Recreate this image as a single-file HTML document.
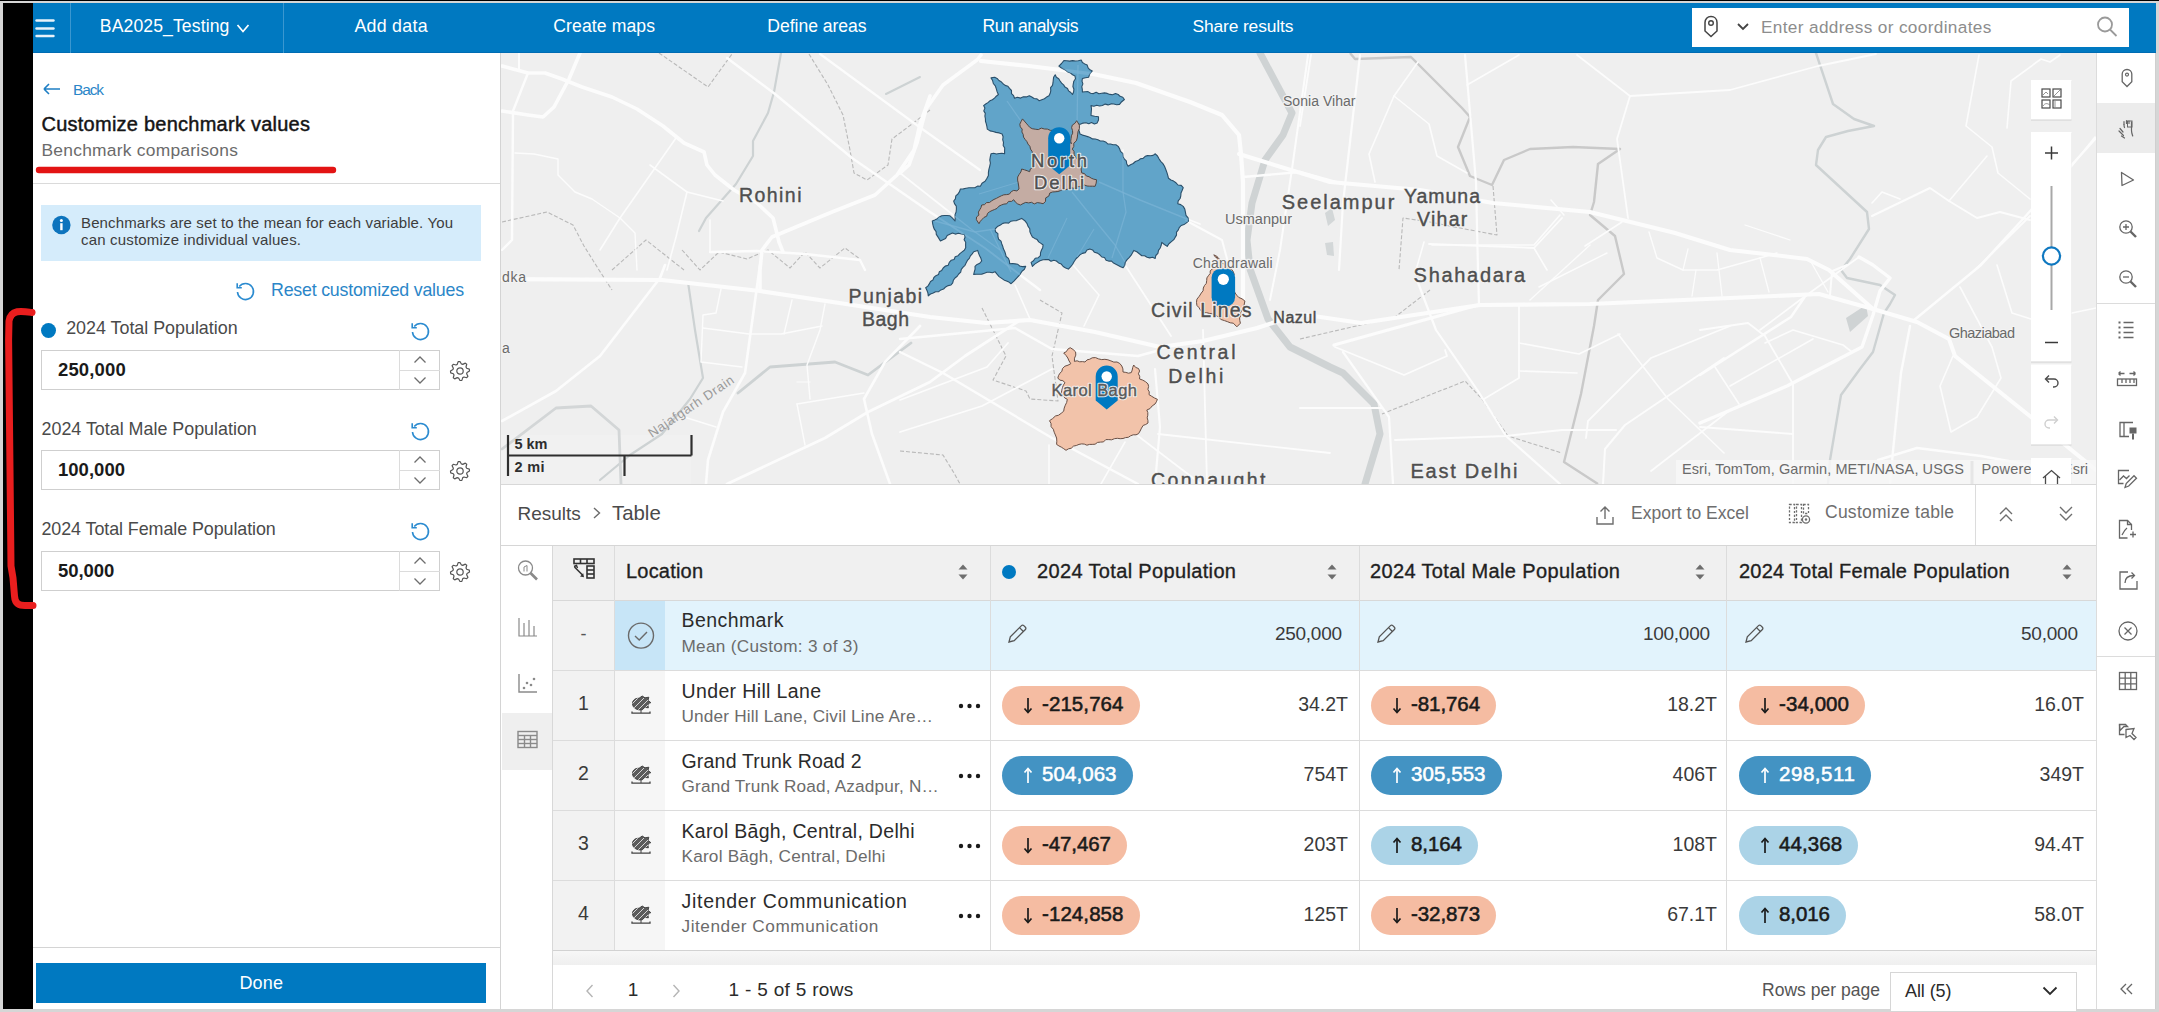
<!DOCTYPE html>
<html><head><meta charset="utf-8"><title>Business Analyst</title>
<style>
html,body{margin:0;padding:0;width:2159px;height:1012px;overflow:hidden;position:relative;font-family:"Liberation Sans",sans-serif;}
svg{display:block;overflow:visible}
</style></head><body>
<div style="position:absolute;left:0px;top:0px;width:2159px;height:1012px;background:#d6d6d6;"></div>
<div style="position:absolute;left:0px;top:0px;width:2159px;height:1px;background:#000;"></div>
<div style="position:absolute;left:3px;top:3px;width:30px;height:1006px;background:#000;"></div>
<div style="position:absolute;left:33px;top:3px;width:2123px;height:50px;background:#0079c1;"></div>
<div style="position:absolute;left:33px;top:52px;width:2123px;height:1px;background:#006cb3;"></div>
<div style="position:absolute;left:70px;top:3px;width:1px;height:50px;background:#3a97d0;"></div>
<div style="position:absolute;left:283px;top:3px;width:1px;height:50px;background:#3a97d0;"></div>
<svg style="position:absolute;left:35px;top:17px;" width="20" height="22" viewBox="0 0 20 22"><g stroke="#e8f2fa" stroke-width="2.4" stroke-linecap="round"><line x1="1.5" y1="3.5" x2="18.5" y2="3.5"/><line x1="1.5" y1="11.5" x2="18.5" y2="11.5"/><line x1="1.5" y1="19" x2="18.5" y2="19"/></g></svg>
<div style="position:absolute;top:15.70px;font-size:17.6px;line-height:21px;color:#ffffff;font-weight:normal;white-space:nowrap;letter-spacing:0.109px;left:99.8px;">BA2025_Testing</div>
<svg style="position:absolute;left:236px;top:23px;" width="14" height="12" viewBox="0 0 14 12"><polyline points="1.5,2 7,8.5 12.5,2" fill="none" stroke="#fff" stroke-width="1.7"/></svg>
<div style="position:absolute;top:15.63px;font-size:17.8px;line-height:21px;color:#ffffff;font-weight:normal;white-space:nowrap;letter-spacing:0.277px;left:354.4px;">Add data</div>
<div style="position:absolute;top:15.70px;font-size:17.6px;line-height:21px;color:#ffffff;font-weight:normal;white-space:nowrap;letter-spacing:0.094px;left:553.3px;">Create maps</div>
<div style="position:absolute;top:15.70px;font-size:17.6px;line-height:21px;color:#ffffff;font-weight:normal;white-space:nowrap;letter-spacing:-0.036px;left:767.3px;">Define areas</div>
<div style="position:absolute;top:15.70px;font-size:17.6px;line-height:21px;color:#ffffff;font-weight:normal;white-space:nowrap;letter-spacing:-0.415px;left:982.5px;">Run analysis</div>
<div style="position:absolute;top:15.77px;font-size:17.4px;line-height:21px;color:#ffffff;font-weight:normal;white-space:nowrap;letter-spacing:-0.143px;left:1192.6px;">Share results</div>
<div style="position:absolute;left:1692px;top:8px;width:437px;height:39px;background:#fff;"></div>
<svg style="position:absolute;left:1700px;top:14px;" width="24" height="26" viewBox="0 0 24 26"><path d="M11 2.5c-3.6 0-6 2.6-6 6v8.5l6 5.5 6-5.5V8.5c0-3.4-2.4-6-6-6z" fill="none" stroke="#444" stroke-width="1.5"/><circle cx="11" cy="9" r="2.3" fill="none" stroke="#444" stroke-width="1.4"/></svg>
<svg style="position:absolute;left:1736px;top:22px;" width="14" height="10" viewBox="0 0 14 10"><polyline points="2,2 7,7 12,2" fill="none" stroke="#444" stroke-width="1.8"/></svg>
<div style="position:absolute;top:16.54px;font-size:17.2px;line-height:21px;color:#8d8d8d;font-weight:normal;white-space:nowrap;letter-spacing:0.357px;left:1761px;">Enter address or coordinates</div>
<svg style="position:absolute;left:2094px;top:14px;" width="26" height="26" viewBox="0 0 26 26"><circle cx="11" cy="10.5" r="7" fill="none" stroke="#9a9a9a" stroke-width="1.8"/><line x1="16" y1="15.5" x2="22.5" y2="22" stroke="#9a9a9a" stroke-width="1.8"/></svg>
<div style="position:absolute;left:33px;top:53px;width:468px;height:956px;background:#fff;"></div>
<div style="position:absolute;left:500px;top:53px;width:1px;height:956px;background:#d4d4d4;"></div>
<svg style="position:absolute;left:42px;top:82px;" width="20" height="14" viewBox="0 0 20 14"><path d="M2 7h16M2 7l5-5M2 7l5 5" fill="none" stroke="#1f7fc4" stroke-width="1.6"/></svg>
<div style="position:absolute;top:79.63px;font-size:15.5px;line-height:19px;color:#2b86c8;font-weight:normal;white-space:nowrap;letter-spacing:-1.153px;left:73px;">Back</div>
<div style="position:absolute;top:112.07px;font-size:20px;line-height:24px;color:#151515;font-weight:normal;white-space:nowrap;letter-spacing:0.246px;left:41.5px;-webkit-text-stroke:0.45px #151515;">Customize benchmark values</div>
<div style="position:absolute;top:139.77px;font-size:17.4px;line-height:21px;color:#6b6b6b;font-weight:normal;white-space:nowrap;letter-spacing:0.251px;left:41.5px;">Benchmark comparisons</div>
<div style="position:absolute;left:33px;top:183px;width:467px;height:1px;background:#dadada;"></div>
<div style="position:absolute;left:41px;top:205px;width:440px;height:56px;background:#d5ecfb;"></div>
<svg style="position:absolute;left:51px;top:215px;" width="21" height="21" viewBox="0 0 21 21"><circle cx="10.4" cy="10" r="9.2" fill="#0d74bd"/><rect x="9.2" y="8.2" width="2.4" height="7" fill="#fff"/><circle cx="10.4" cy="5.4" r="1.5" fill="#fff"/></svg>
<div style="position:absolute;top:213.80px;font-size:15px;line-height:18px;color:#3d3d3d;font-weight:normal;white-space:nowrap;letter-spacing:0.130px;left:81px;">Benchmarks are set to the mean for each variable. You</div>
<div style="position:absolute;top:231.20px;font-size:15px;line-height:18px;color:#3d3d3d;font-weight:normal;white-space:nowrap;letter-spacing:0.184px;left:81px;">can customize individual values.</div>
<svg style="position:absolute;left:233.5px;top:279.5px;" width="22" height="22" viewBox="0 0 22 22"><path d="M5.2 6.6A8 8 0 1 1 3.5 12" fill="none" stroke="#2b8bd0" stroke-width="1.6"/><path d="M3.2 3.2v4.6h4.6" fill="none" stroke="#2b8bd0" stroke-width="1.6"/></svg>
<div style="position:absolute;top:280.33px;font-size:17.8px;line-height:21px;color:#2b86c8;font-weight:normal;white-space:nowrap;letter-spacing:-0.208px;left:271px;">Reset customized values</div>
<div style="position:absolute;left:41px;top:322.5px;width:15px;height:15px;background:#0079c1;border-radius:50%;"></div>
<div style="position:absolute;top:318.30px;font-size:17.9px;line-height:21px;color:#4a4a4a;font-weight:normal;white-space:nowrap;letter-spacing:-0.018px;left:66.2px;">2024 Total Population</div>
<svg style="position:absolute;left:409px;top:319.5px;" width="22" height="22" viewBox="0 0 22 22"><path d="M5.2 6.6A8 8 0 1 1 3.5 12" fill="none" stroke="#2b8bd0" stroke-width="1.6"/><path d="M3.2 3.2v4.6h4.6" fill="none" stroke="#2b8bd0" stroke-width="1.6"/></svg>
<div style="position:absolute;left:41px;top:350px;width:399px;height:40px;background:#fff;border:1px solid #cfcfcf;box-sizing:border-box;"></div>
<div style="position:absolute;left:399px;top:350px;width:1px;height:40px;background:#dcdcdc;"></div>
<div style="position:absolute;left:399px;top:370px;width:41px;height:1px;background:#dcdcdc;"></div>
<svg style="position:absolute;left:412px;top:353px;" width="16" height="14" viewBox="0 0 16 14"><polyline points="2.5,9.5 8,4 13.5,9.5" fill="none" stroke="#6e6e6e" stroke-width="1.3"/></svg>
<svg style="position:absolute;left:412px;top:373px;" width="16" height="14" viewBox="0 0 16 14"><polyline points="2.5,4.5 8,10 13.5,4.5" fill="none" stroke="#6e6e6e" stroke-width="1.3"/></svg>
<div style="position:absolute;top:359.09px;font-size:18.5px;line-height:22px;color:#1a1a1a;font-weight:bold;white-space:nowrap;letter-spacing:0.138px;left:58px;">250,000</div>
<svg style="position:absolute;left:450px;top:360.5px;" width="20" height="20" viewBox="0 0 20 20"><polygon points="19.32,8.15 19.50,10.00 17.06,11.40 16.65,12.76 17.90,15.28 16.72,16.72 14.00,15.99 12.76,16.65 11.85,19.32 10.00,19.50 8.60,17.06 7.24,16.65 4.72,17.90 3.28,16.72 4.01,14.00 3.35,12.76 0.68,11.85 0.50,10.00 2.94,8.60 3.35,7.24 2.10,4.72 3.28,3.28 6.00,4.01 7.24,3.35 8.15,0.68 10.00,0.50 11.40,2.94 12.76,3.35 15.28,2.10 16.72,3.28 15.99,6.00 16.65,7.24" fill="none" stroke="#555" stroke-width="1.2" stroke-linejoin="round"/><circle cx="10" cy="10" r="3.2" fill="none" stroke="#555" stroke-width="1.2"/></svg>
<div style="position:absolute;top:418.90px;font-size:17.9px;line-height:21px;color:#4a4a4a;font-weight:normal;white-space:nowrap;letter-spacing:-0.009px;left:41.5px;">2024 Total Male Population</div>
<svg style="position:absolute;left:409px;top:420.1px;" width="22" height="22" viewBox="0 0 22 22"><path d="M5.2 6.6A8 8 0 1 1 3.5 12" fill="none" stroke="#2b8bd0" stroke-width="1.6"/><path d="M3.2 3.2v4.6h4.6" fill="none" stroke="#2b8bd0" stroke-width="1.6"/></svg>
<div style="position:absolute;left:41px;top:450px;width:399px;height:40px;background:#fff;border:1px solid #cfcfcf;box-sizing:border-box;"></div>
<div style="position:absolute;left:399px;top:450px;width:1px;height:40px;background:#dcdcdc;"></div>
<div style="position:absolute;left:399px;top:470px;width:41px;height:1px;background:#dcdcdc;"></div>
<svg style="position:absolute;left:412px;top:453px;" width="16" height="14" viewBox="0 0 16 14"><polyline points="2.5,9.5 8,4 13.5,9.5" fill="none" stroke="#6e6e6e" stroke-width="1.3"/></svg>
<svg style="position:absolute;left:412px;top:473px;" width="16" height="14" viewBox="0 0 16 14"><polyline points="2.5,4.5 8,10 13.5,4.5" fill="none" stroke="#6e6e6e" stroke-width="1.3"/></svg>
<div style="position:absolute;top:459.09px;font-size:18.5px;line-height:22px;color:#1a1a1a;font-weight:bold;white-space:nowrap;letter-spacing:0.021px;left:58px;">100,000</div>
<svg style="position:absolute;left:450px;top:460.5px;" width="20" height="20" viewBox="0 0 20 20"><polygon points="19.32,8.15 19.50,10.00 17.06,11.40 16.65,12.76 17.90,15.28 16.72,16.72 14.00,15.99 12.76,16.65 11.85,19.32 10.00,19.50 8.60,17.06 7.24,16.65 4.72,17.90 3.28,16.72 4.01,14.00 3.35,12.76 0.68,11.85 0.50,10.00 2.94,8.60 3.35,7.24 2.10,4.72 3.28,3.28 6.00,4.01 7.24,3.35 8.15,0.68 10.00,0.50 11.40,2.94 12.76,3.35 15.28,2.10 16.72,3.28 15.99,6.00 16.65,7.24" fill="none" stroke="#555" stroke-width="1.2" stroke-linejoin="round"/><circle cx="10" cy="10" r="3.2" fill="none" stroke="#555" stroke-width="1.2"/></svg>
<div style="position:absolute;top:519.20px;font-size:17.9px;line-height:21px;color:#4a4a4a;font-weight:normal;white-space:nowrap;letter-spacing:-0.078px;left:41.5px;">2024 Total Female Population</div>
<svg style="position:absolute;left:409px;top:520.4px;" width="22" height="22" viewBox="0 0 22 22"><path d="M5.2 6.6A8 8 0 1 1 3.5 12" fill="none" stroke="#2b8bd0" stroke-width="1.6"/><path d="M3.2 3.2v4.6h4.6" fill="none" stroke="#2b8bd0" stroke-width="1.6"/></svg>
<div style="position:absolute;left:41px;top:551px;width:399px;height:40px;background:#fff;border:1px solid #cfcfcf;box-sizing:border-box;"></div>
<div style="position:absolute;left:399px;top:551px;width:1px;height:40px;background:#dcdcdc;"></div>
<div style="position:absolute;left:399px;top:571px;width:41px;height:1px;background:#dcdcdc;"></div>
<svg style="position:absolute;left:412px;top:554px;" width="16" height="14" viewBox="0 0 16 14"><polyline points="2.5,9.5 8,4 13.5,9.5" fill="none" stroke="#6e6e6e" stroke-width="1.3"/></svg>
<svg style="position:absolute;left:412px;top:574px;" width="16" height="14" viewBox="0 0 16 14"><polyline points="2.5,4.5 8,10 13.5,4.5" fill="none" stroke="#6e6e6e" stroke-width="1.3"/></svg>
<div style="position:absolute;top:560.09px;font-size:18.5px;line-height:22px;color:#1a1a1a;font-weight:bold;white-space:nowrap;letter-spacing:-0.057px;left:58px;">50,000</div>
<svg style="position:absolute;left:450px;top:561.5px;" width="20" height="20" viewBox="0 0 20 20"><polygon points="19.32,8.15 19.50,10.00 17.06,11.40 16.65,12.76 17.90,15.28 16.72,16.72 14.00,15.99 12.76,16.65 11.85,19.32 10.00,19.50 8.60,17.06 7.24,16.65 4.72,17.90 3.28,16.72 4.01,14.00 3.35,12.76 0.68,11.85 0.50,10.00 2.94,8.60 3.35,7.24 2.10,4.72 3.28,3.28 6.00,4.01 7.24,3.35 8.15,0.68 10.00,0.50 11.40,2.94 12.76,3.35 15.28,2.10 16.72,3.28 15.99,6.00 16.65,7.24" fill="none" stroke="#555" stroke-width="1.2" stroke-linejoin="round"/><circle cx="10" cy="10" r="3.2" fill="none" stroke="#555" stroke-width="1.2"/></svg>
<div style="position:absolute;left:33px;top:947px;width:467px;height:1px;background:#d4d4d4;"></div>
<div style="position:absolute;left:36px;top:963px;width:450px;height:40px;background:#0079c1;"></div>
<div style="position:absolute;top:971.76px;font-size:18px;line-height:22px;color:#fff;font-weight:normal;white-space:nowrap;letter-spacing:0.122px;left:239.5px;">Done</div>
<svg style="position:absolute;left:0;top:0;" width="2159" height="1012" viewBox="0 0 2159 1012"><defs><clipPath id="mc"><rect x="501" y="53" width="1595" height="431"/></clipPath></defs><g clip-path="url(#mc)" font-family="Liberation Sans, sans-serif"><rect x="501" y="53" width="1595" height="431" fill="#efefef"/><rect x="501" y="435" width="190" height="49" fill="#f1f1f1" opacity="0.8"/><polyline points="1260.0,53.0 1277.0,85.0 1292.0,113.0 1283.0,135.0 1265.0,160.0 1252.0,203.0 1247.0,240.0 1250.0,269.0 1268.0,319.0 1290.0,347.0 1330.0,367.0 1343.0,373.0 1374.0,404.0 1380.0,434.0 1365.0,484.0" fill="none" stroke="#cfd3d4" stroke-width="7" stroke-linejoin="round" stroke-linecap="round"/><polyline points="781.0,53.0 774.0,92.0 768.0,113.0 753.0,141.0 753.0,156.0 736.0,184.0 706.0,218.0 699.0,231.0" fill="none" stroke="#cdd2d3" stroke-width="2.2" stroke-linejoin="round" stroke-linecap="round"/><polyline points="886.0,94.0 920.0,77.0" fill="none" stroke="#cdd2d3" stroke-width="2" stroke-linejoin="round" stroke-linecap="round"/><polyline points="688.0,282.0 695.0,330.0 703.0,378.0 690.0,399.0 662.0,434.0 630.0,455.0 600.0,480.0" fill="none" stroke="#cdd2d3" stroke-width="2.2" stroke-linejoin="round" stroke-linecap="round"/><polyline points="738.0,393.0 770.0,367.0 835.0,362.0 868.0,375.0 911.0,343.0" fill="none" stroke="#cdd2d3" stroke-width="2.8" stroke-linejoin="round" stroke-linecap="round"/><polyline points="502.0,449.0 556.0,408.0 591.0,406.0 619.0,430.0 621.0,484.0" fill="none" stroke="#d3d6d7" stroke-width="2.8" stroke-linejoin="round" stroke-linecap="round"/><polyline points="1816.0,53.0 1833.0,104.0 1854.0,119.0 1874.0,126.0 1848.0,131.0 1826.0,137.0 1818.0,150.0 1816.0,165.0 1867.0,212.0 1869.0,229.0 1850.0,259.0 1841.0,270.0 1847.0,278.0 1880.0,285.0 1895.0,295.0 1890.0,304.0 1884.0,313.0 1873.0,352.0 1860.0,369.0 1841.0,395.0 1830.0,460.0 1828.0,484.0" fill="none" stroke="#cdd2d3" stroke-width="2.4" stroke-linejoin="round" stroke-linecap="round"/><polygon points="1846,318 1866,305 1868,316 1850,332" fill="#cfd3d4"/><polygon points="1325,213 1332,208 1335,220 1328,226" fill="#d3d7d8"/><polygon points="1325,243 1333,242 1334,256 1327,255" fill="#d3d7d8"/><polyline points="659.0,53.0 708.0,87.0 732.0,54.0" fill="none" stroke="#b9b9b9" stroke-width="1.1" stroke-dasharray="4 2" stroke-linejoin="round"/><polyline points="809.0,54.0 828.0,85.0 843.0,115.0 850.0,150.0 854.0,173.0 867.0,180.0 888.0,165.0 892.0,139.0 912.0,124.0 930.0,110.0" fill="none" stroke="#b9b9b9" stroke-width="1.1" stroke-dasharray="4 2" stroke-linejoin="round"/><polyline points="502.0,222.0 547.0,212.0 573.0,225.0 584.0,246.0 599.0,270.0 612.0,290.0" fill="none" stroke="#b9b9b9" stroke-width="1.1" stroke-dasharray="4 2" stroke-linejoin="round"/><polyline points="612.0,270.0 646.0,240.0 684.0,270.0" fill="none" stroke="#b9b9b9" stroke-width="1.1" stroke-dasharray="4 2" stroke-linejoin="round"/><polyline points="682.0,250.0 700.0,270.0 719.0,252.0 747.0,259.0 768.0,250.0 790.0,268.0 805.0,252.0 820.0,268.0 845.0,248.0 860.0,259.0" fill="none" stroke="#b9b9b9" stroke-width="1.1" stroke-dasharray="4 2" stroke-linejoin="round"/><polyline points="1350.0,53.0 1355.0,59.0 1411.0,57.0 1462.0,108.0 1470.0,117.0 1458.0,147.0 1470.0,176.0 1492.0,185.0 1504.0,160.0 1530.0,149.0 1573.0,147.0 1620.0,149.0 1598.0,164.0 1594.0,202.0 1590.0,215.0 1615.0,236.0 1624.0,274.0 1598.0,300.0 1594.0,326.0 1581.0,394.0 1564.0,462.0 1598.0,484.0" fill="none" stroke="#c9c9c9" stroke-width="2.4" stroke-dasharray="0" stroke-linejoin="round"/><polyline points="1493.0,186.0 1497.0,235.0 1465.0,229.0 1430.0,222.0 1403.0,218.0 1399.0,270.0" fill="none" stroke="#b9b9b9" stroke-width="1.1" stroke-dasharray="4 2" stroke-linejoin="round"/><polyline points="1300.0,339.0 1395.0,317.0 1430.0,290.0" fill="none" stroke="#b9b9b9" stroke-width="1.1" stroke-dasharray="4 2" stroke-linejoin="round"/><polyline points="1382.0,414.0 1465.0,381.0 1482.0,399.0 1508.0,436.0 1562.0,453.0" fill="none" stroke="#b9b9b9" stroke-width="1.1" stroke-dasharray="4 2" stroke-linejoin="round"/><polyline points="982.0,308.0 1006.0,356.0 993.0,380.0 1026.0,391.0 1030.0,399.0 1058.0,401.0 1052.0,356.0 1062.0,313.0 1040.0,300.0" fill="none" stroke="#b9b9b9" stroke-width="1.1" stroke-dasharray="4 2" stroke-linejoin="round"/><polyline points="900.0,451.0 943.0,455.0 954.0,473.0 960.0,484.0" fill="none" stroke="#b9b9b9" stroke-width="1.1" stroke-dasharray="4 2" stroke-linejoin="round"/><polyline points="502.0,66.0 528.0,73.0 545.0,73.0 562.0,79.0 582.0,87.0 612.0,97.0 637.0,109.0 663.0,126.0 684.0,143.0 704.0,152.0 707.0,165.0 715.0,175.0 734.0,190.0 757.0,203.0 773.0,218.0 779.0,242.0 783.0,252.0" fill="none" stroke="#fcfcfc" stroke-width="3.6" stroke-linejoin="round" stroke-linecap="round"/><polyline points="580.0,53.0 569.0,79.0 554.0,107.0 543.0,117.0 528.0,115.0 502.0,111.0" fill="none" stroke="#fcfcfc" stroke-width="3.6" stroke-linejoin="round" stroke-linecap="round"/><polyline points="528.0,73.0 513.0,111.0 512.0,240.0 502.0,250.0" fill="none" stroke="#fcfcfc" stroke-width="2.4" stroke-linejoin="round" stroke-linecap="round"/><polyline points="519.0,53.0 519.0,70.0" fill="none" stroke="#fcfcfc" stroke-width="2" stroke-linejoin="round" stroke-linecap="round"/><polyline points="727.0,58.0 775.0,94.0 852.0,158.0 930.0,212.0 985.0,248.0 1040.0,290.0" fill="none" stroke="#fcfcfc" stroke-width="2.4" stroke-linejoin="round" stroke-linecap="round"/><polyline points="820.0,54.0 918.0,126.0 980.0,170.0" fill="none" stroke="#fcfcfc" stroke-width="2.2" stroke-linejoin="round" stroke-linecap="round"/><polyline points="930.0,96.0 920.0,124.0 914.0,150.0 897.0,175.0 875.0,195.0 832.0,212.0 796.0,227.0 772.0,237.0 762.0,250.0 760.0,270.0 760.0,291.0" fill="none" stroke="#fcfcfc" stroke-width="3.6" stroke-linejoin="round" stroke-linecap="round"/><polyline points="710.0,252.0 757.0,251.0 805.0,254.0 860.0,260.0 865.0,270.0" fill="none" stroke="#fcfcfc" stroke-width="2.4" stroke-linejoin="round" stroke-linecap="round"/><polyline points="676.0,138.0 620.0,218.0 600.0,250.0" fill="none" stroke="#fcfcfc" stroke-width="1.6" stroke-linejoin="round" stroke-linecap="round"/><polyline points="650.0,165.0 687.0,192.0 723.0,201.0" fill="none" stroke="#fcfcfc" stroke-width="1.6" stroke-linejoin="round" stroke-linecap="round"/><polyline points="687.0,192.0 676.0,237.0 667.0,270.0" fill="none" stroke="#fcfcfc" stroke-width="1.6" stroke-linejoin="round" stroke-linecap="round"/><polyline points="515.0,153.0 534.0,154.0 558.0,159.0 558.0,175.0 575.0,192.0 592.0,199.0 620.0,218.0 635.0,233.0 637.0,270.0" fill="none" stroke="#fcfcfc" stroke-width="1.4" stroke-linejoin="round" stroke-linecap="round"/><polyline points="710.0,220.0 710.0,252.0" fill="none" stroke="#fcfcfc" stroke-width="1.6" stroke-linejoin="round" stroke-linecap="round"/><polyline points="981.0,55.0 977.0,60.0 943.0,85.0 926.0,109.0 917.0,143.0 909.0,165.0 900.0,173.0" fill="none" stroke="#fcfcfc" stroke-width="3.6" stroke-linejoin="round" stroke-linecap="round"/><polyline points="981.0,61.0 1029.0,66.0 1093.0,74.0 1136.0,83.0 1190.0,102.0 1222.0,115.0 1239.0,135.0 1241.0,154.0 1243.0,182.0 1243.0,270.0 1243.0,300.0" fill="none" stroke="#fcfcfc" stroke-width="4.2" stroke-linejoin="round" stroke-linecap="round"/><polyline points="1239.0,154.0 1330.0,182.0 1420.0,190.0 1493.0,203.0 1590.0,212.0 1675.0,233.0 1730.0,250.0 1765.0,254.0 1807.0,259.0 1829.0,270.0 1873.0,309.0 1917.0,322.0 1949.0,339.0 1955.0,356.0 2031.0,417.0 2096.0,470.0" fill="none" stroke="#fcfcfc" stroke-width="4.0" stroke-linejoin="round" stroke-linecap="round"/><polyline points="1243.0,177.0 1300.0,172.0 1343.0,184.0" fill="none" stroke="#fcfcfc" stroke-width="2.4" stroke-linejoin="round" stroke-linecap="round"/><polyline points="1185.0,220.0 1222.0,240.0 1230.0,270.0" fill="none" stroke="#fcfcfc" stroke-width="2" stroke-linejoin="round" stroke-linecap="round"/><polyline points="1308.0,55.0 1292.0,169.0 1280.0,250.0 1270.0,300.0" fill="none" stroke="#fcfcfc" stroke-width="2" stroke-linejoin="round" stroke-linecap="round"/><polyline points="900.0,173.0 971.0,229.0 1000.0,250.0" fill="none" stroke="#fcfcfc" stroke-width="1.8" stroke-linejoin="round" stroke-linecap="round"/><polyline points="502.0,279.0 662.0,280.0 760.0,291.0 846.0,304.0 930.0,317.0 986.0,323.0 1030.0,320.0 1095.0,332.0 1160.0,347.0 1203.0,341.0 1257.0,328.0 1300.0,314.0 1361.0,323.0 1480.0,305.0 1590.0,304.0 1730.0,298.0 1819.0,294.0 1873.0,309.0" fill="none" stroke="#fcfcfc" stroke-width="4.2" stroke-linejoin="round" stroke-linecap="round"/><polyline points="900.0,339.0 1015.0,328.0 1052.0,349.0 1138.0,356.0 1160.0,350.0" fill="none" stroke="#fcfcfc" stroke-width="2.4" stroke-linejoin="round" stroke-linecap="round"/><polyline points="502.0,421.0 556.0,391.0 600.0,356.0 660.0,278.0 665.0,265.0" fill="none" stroke="#fcfcfc" stroke-width="2.6" stroke-linejoin="round" stroke-linecap="round"/><polyline points="760.0,265.0 745.0,373.0 723.0,412.0 708.0,460.0 706.0,484.0" fill="none" stroke="#fcfcfc" stroke-width="2.6" stroke-linejoin="round" stroke-linecap="round"/><polyline points="727.0,484.0 825.0,438.0 868.0,412.0 930.0,382.0 965.0,356.0 1019.0,321.0" fill="none" stroke="#fcfcfc" stroke-width="2.8" stroke-linejoin="round" stroke-linecap="round"/><polyline points="920.0,326.0 885.0,362.0 864.0,399.0 872.0,434.0 890.0,484.0" fill="none" stroke="#fcfcfc" stroke-width="2.6" stroke-linejoin="round" stroke-linecap="round"/><polyline points="900.0,400.0 987.0,367.0 1008.0,343.0" fill="none" stroke="#fcfcfc" stroke-width="1.8" stroke-linejoin="round" stroke-linecap="round"/><polyline points="900.0,352.0 943.0,373.0 1052.0,438.0 1138.0,484.0" fill="none" stroke="#fcfcfc" stroke-width="2.4" stroke-linejoin="round" stroke-linecap="round"/><polyline points="900.0,432.0 982.0,406.0 1052.0,369.0" fill="none" stroke="#fcfcfc" stroke-width="1.8" stroke-linejoin="round" stroke-linecap="round"/><polyline points="1155.0,369.0 1160.0,427.0 1155.0,484.0" fill="none" stroke="#fcfcfc" stroke-width="2.2" stroke-linejoin="round" stroke-linecap="round"/><polyline points="1203.0,330.0 1207.0,484.0" fill="none" stroke="#fcfcfc" stroke-width="1.8" stroke-linejoin="round" stroke-linecap="round"/><polyline points="1125.0,265.0 1171.0,336.0" fill="none" stroke="#fcfcfc" stroke-width="1.8" stroke-linejoin="round" stroke-linecap="round"/><polyline points="1015.0,285.0 1030.0,319.0" fill="none" stroke="#fcfcfc" stroke-width="1.6" stroke-linejoin="round" stroke-linecap="round"/><polyline points="1073.0,265.0 1099.0,295.0 1084.0,326.0" fill="none" stroke="#fcfcfc" stroke-width="1.6" stroke-linejoin="round" stroke-linecap="round"/><polyline points="1158.0,434.0 1330.0,453.0" fill="none" stroke="#fcfcfc" stroke-width="1.8" stroke-linejoin="round" stroke-linecap="round"/><polyline points="1138.0,436.0 1201.0,484.0" fill="none" stroke="#fcfcfc" stroke-width="1.8" stroke-linejoin="round" stroke-linecap="round"/><polyline points="1125.0,442.0 1101.0,484.0" fill="none" stroke="#fcfcfc" stroke-width="1.6" stroke-linejoin="round" stroke-linecap="round"/><polyline points="1049.0,445.0 1049.0,484.0" fill="none" stroke="#fcfcfc" stroke-width="1.6" stroke-linejoin="round" stroke-linecap="round"/><polyline points="1300.0,408.0 1382.0,408.0" fill="none" stroke="#fcfcfc" stroke-width="2.2" stroke-linejoin="round" stroke-linecap="round"/><polyline points="1334.0,345.0 1478.0,305.0" fill="none" stroke="#fcfcfc" stroke-width="3.2" stroke-linejoin="round" stroke-linecap="round"/><polyline points="1335.0,347.0 1404.0,375.0 1447.0,356.0 1445.0,350.0" fill="none" stroke="#fcfcfc" stroke-width="1.8" stroke-linejoin="round" stroke-linecap="round"/><polyline points="1417.0,280.0 1436.0,330.0 1478.0,391.0 1506.0,436.0 1560.0,484.0" fill="none" stroke="#fcfcfc" stroke-width="2.2" stroke-linejoin="round" stroke-linecap="round"/><polyline points="1343.0,352.0 1389.0,417.0 1393.0,484.0" fill="none" stroke="#fcfcfc" stroke-width="2.2" stroke-linejoin="round" stroke-linecap="round"/><polyline points="1395.0,440.0 1506.0,436.0 1562.0,430.0 1616.0,430.0" fill="none" stroke="#fcfcfc" stroke-width="2" stroke-linejoin="round" stroke-linecap="round"/><polyline points="1519.0,306.0 1519.0,378.0 1484.0,399.0" fill="none" stroke="#fcfcfc" stroke-width="1.8" stroke-linejoin="round" stroke-linecap="round"/><polyline points="1519.0,371.0 1577.0,373.0" fill="none" stroke="#fcfcfc" stroke-width="1.6" stroke-linejoin="round" stroke-linecap="round"/><polyline points="1519.0,343.0 1579.0,354.0 1620.0,334.0" fill="none" stroke="#fcfcfc" stroke-width="1.6" stroke-linejoin="round" stroke-linecap="round"/><polyline points="1724.0,358.0 1625.0,425.0 1605.0,449.0 1603.0,484.0" fill="none" stroke="#fcfcfc" stroke-width="2" stroke-linejoin="round" stroke-linecap="round"/><polyline points="1730.0,326.0 1651.0,358.0 1588.0,421.0 1586.0,438.0" fill="none" stroke="#fcfcfc" stroke-width="1.8" stroke-linejoin="round" stroke-linecap="round"/><polyline points="1618.0,334.0 1668.0,399.0 1724.0,453.0" fill="none" stroke="#fcfcfc" stroke-width="1.6" stroke-linejoin="round" stroke-linecap="round"/><polyline points="1730.0,410.0 1651.0,471.0" fill="none" stroke="#fcfcfc" stroke-width="1.8" stroke-linejoin="round" stroke-linecap="round"/><polyline points="1360.0,55.0 1343.0,203.0 1339.0,270.0" fill="none" stroke="#fcfcfc" stroke-width="2.2" stroke-linejoin="round" stroke-linecap="round"/><polyline points="1311.0,55.0 1300.0,126.0" fill="none" stroke="#fcfcfc" stroke-width="1.8" stroke-linejoin="round" stroke-linecap="round"/><polyline points="1465.0,55.0 1476.0,182.0 1478.0,270.0 1479.0,305.0" fill="none" stroke="#fcfcfc" stroke-width="2.2" stroke-linejoin="round" stroke-linecap="round"/><polyline points="1467.0,85.0 1519.0,55.0" fill="none" stroke="#fcfcfc" stroke-width="1.6" stroke-linejoin="round" stroke-linecap="round"/><polyline points="1577.0,55.0 1630.0,96.0 1617.0,139.0 1628.0,218.0" fill="none" stroke="#fcfcfc" stroke-width="1.8" stroke-linejoin="round" stroke-linecap="round"/><polyline points="1630.0,96.0 1730.0,90.0 1818.0,66.0 1876.0,54.0" fill="none" stroke="#fcfcfc" stroke-width="1.8" stroke-linejoin="round" stroke-linecap="round"/><polyline points="1394.0,96.0 1369.0,154.0 1375.0,182.0" fill="none" stroke="#fcfcfc" stroke-width="1.6" stroke-linejoin="round" stroke-linecap="round"/><polyline points="1394.0,96.0 1429.0,124.0 1437.0,156.0 1467.0,173.0" fill="none" stroke="#fcfcfc" stroke-width="1.6" stroke-linejoin="round" stroke-linecap="round"/><polyline points="1418.0,62.0 1394.0,96.0" fill="none" stroke="#fcfcfc" stroke-width="1.6" stroke-linejoin="round" stroke-linecap="round"/><polyline points="1429.0,244.0 1534.0,248.0 1562.0,218.0" fill="none" stroke="#fcfcfc" stroke-width="1.8" stroke-linejoin="round" stroke-linecap="round"/><polyline points="1534.0,248.0 1547.0,270.0" fill="none" stroke="#fcfcfc" stroke-width="1.6" stroke-linejoin="round" stroke-linecap="round"/><polyline points="1424.0,242.0 1416.0,270.0" fill="none" stroke="#fcfcfc" stroke-width="1.6" stroke-linejoin="round" stroke-linecap="round"/><polyline points="1585.0,246.0 1622.0,222.0" fill="none" stroke="#fcfcfc" stroke-width="1.6" stroke-linejoin="round" stroke-linecap="round"/><polyline points="1872.0,216.0 1930.0,188.0 1949.0,201.0 1977.0,218.0 2000.0,212.0 2030.0,220.0" fill="none" stroke="#fcfcfc" stroke-width="2" stroke-linejoin="round" stroke-linecap="round"/><polyline points="1872.0,203.0 1882.0,192.0 1900.0,199.0" fill="none" stroke="#fcfcfc" stroke-width="1.6" stroke-linejoin="round" stroke-linecap="round"/><polyline points="1949.0,201.0 1987.0,156.0" fill="none" stroke="#fcfcfc" stroke-width="1.6" stroke-linejoin="round" stroke-linecap="round"/><polyline points="1979.0,55.0 1966.0,126.0 1992.0,147.0 1998.0,173.0 2030.0,199.0" fill="none" stroke="#fcfcfc" stroke-width="1.6" stroke-linejoin="round" stroke-linecap="round"/><polyline points="2007.0,128.0 2011.0,81.0 2041.0,59.0 2050.0,62.0 2060.0,55.0" fill="none" stroke="#fcfcfc" stroke-width="1.6" stroke-linejoin="round" stroke-linecap="round"/><polyline points="2071.0,167.0 2095.0,137.0" fill="none" stroke="#fcfcfc" stroke-width="1.6" stroke-linejoin="round" stroke-linecap="round"/><polyline points="1975.0,270.0 2030.0,216.0" fill="none" stroke="#fcfcfc" stroke-width="2" stroke-linejoin="round" stroke-linecap="round"/><polyline points="1700.0,423.0 1787.0,386.0 1862.0,347.0 1873.0,315.0 1880.0,291.0 1890.0,278.0 1873.0,265.0 1859.0,257.0" fill="none" stroke="#fcfcfc" stroke-width="3.4" stroke-linejoin="round" stroke-linecap="round"/><polyline points="1830.0,272.0 1847.0,265.0" fill="none" stroke="#fcfcfc" stroke-width="2" stroke-linejoin="round" stroke-linecap="round"/><polyline points="1832.0,272.0 1830.0,295.0" fill="none" stroke="#fcfcfc" stroke-width="2" stroke-linejoin="round" stroke-linecap="round"/><polyline points="1913.0,321.0 1981.0,265.0 2023.0,219.0 2096.0,138.0" fill="none" stroke="#fcfcfc" stroke-width="2.4" stroke-linejoin="round" stroke-linecap="round"/><polyline points="1910.0,326.0 1901.0,373.0 1893.0,451.0 1890.0,484.0" fill="none" stroke="#fcfcfc" stroke-width="2.4" stroke-linejoin="round" stroke-linecap="round"/><polyline points="1700.0,375.0 1791.0,317.0 1806.0,295.0" fill="none" stroke="#fcfcfc" stroke-width="2.4" stroke-linejoin="round" stroke-linecap="round"/><polyline points="1700.0,330.0 1748.0,323.0 1765.0,336.0 1793.0,384.0 1793.0,484.0" fill="none" stroke="#fcfcfc" stroke-width="1.8" stroke-linejoin="round" stroke-linecap="round"/><polyline points="1765.0,343.0 1793.0,330.0 1843.0,345.0 1852.0,352.0" fill="none" stroke="#fcfcfc" stroke-width="1.6" stroke-linejoin="round" stroke-linecap="round"/><polyline points="1730.0,386.0 1813.0,339.0" fill="none" stroke="#fcfcfc" stroke-width="1.6" stroke-linejoin="round" stroke-linecap="round"/><polyline points="1715.0,367.0 1739.0,404.0" fill="none" stroke="#fcfcfc" stroke-width="1.6" stroke-linejoin="round" stroke-linecap="round"/><polyline points="1700.0,427.0 1793.0,434.0" fill="none" stroke="#fcfcfc" stroke-width="1.8" stroke-linejoin="round" stroke-linecap="round"/><polyline points="1878.0,460.0 1917.0,448.0 1981.0,456.0 2030.0,465.0" fill="none" stroke="#fcfcfc" stroke-width="2.4" stroke-linejoin="round" stroke-linecap="round"/><polyline points="1953.0,356.0 1940.0,386.0 1951.0,432.0 1977.0,417.0 2001.0,378.0 1992.0,347.0 1960.0,287.0" fill="none" stroke="#fcfcfc" stroke-width="1.6" stroke-linejoin="round" stroke-linecap="round"/><polyline points="1997.0,265.0 2012.0,313.0 2031.0,319.0 2072.0,313.0 2096.0,308.0" fill="none" stroke="#fcfcfc" stroke-width="1.6" stroke-linejoin="round" stroke-linecap="round"/><polyline points="1859.0,257.0 1800.0,300.0 1760.0,330.0" fill="none" stroke="#fcfcfc" stroke-width="1.6" stroke-linejoin="round" stroke-linecap="round"/><polyline points="1649.0,232.0 1657.0,258.0 1683.0,270.0 1717.0,270.0 1760.0,258.0 1777.0,253.0" fill="none" stroke="#fcfcfc" stroke-width="1.4" stroke-linejoin="round" stroke-linecap="round"/><polyline points="1760.0,258.0 1769.0,292.0" fill="none" stroke="#fcfcfc" stroke-width="1.3" stroke-linejoin="round" stroke-linecap="round"/><polyline points="1717.0,253.0 1722.0,296.0" fill="none" stroke="#fcfcfc" stroke-width="1.3" stroke-linejoin="round" stroke-linecap="round"/><polyline points="1688.0,249.0 1683.0,270.0" fill="none" stroke="#fcfcfc" stroke-width="1.3" stroke-linejoin="round" stroke-linecap="round"/><polyline points="1696.0,270.0 1692.0,296.0" fill="none" stroke="#fcfcfc" stroke-width="1.3" stroke-linejoin="round" stroke-linecap="round"/><polyline points="1811.0,262.0 1828.0,292.0" fill="none" stroke="#fcfcfc" stroke-width="1.3" stroke-linejoin="round" stroke-linecap="round"/><polyline points="1590.0,245.0 1530.0,300.0" fill="none" stroke="#fcfcfc" stroke-width="1.4" stroke-linejoin="round" stroke-linecap="round"/><polyline points="1539.0,287.0 1607.0,253.0" fill="none" stroke="#fcfcfc" stroke-width="1.4" stroke-linejoin="round" stroke-linecap="round"/><polyline points="1560.0,215.0 1534.0,245.0 1432.0,245.0" fill="none" stroke="#fcfcfc" stroke-width="1.6" stroke-linejoin="round" stroke-linecap="round"/><polyline points="1551.0,200.0 1564.0,215.0" fill="none" stroke="#fcfcfc" stroke-width="1.4" stroke-linejoin="round" stroke-linecap="round"/><polyline points="1745.0,225.0 1790.0,240.0" fill="none" stroke="#fcfcfc" stroke-width="1.3" stroke-linejoin="round" stroke-linecap="round"/><polyline points="721.0,289.0 716.0,313.0 703.0,315.0 701.0,362.0 742.0,367.0" fill="none" stroke="#fcfcfc" stroke-width="1.4" stroke-linejoin="round" stroke-linecap="round"/><polyline points="703.0,328.0 749.0,334.0 781.0,334.0 822.0,326.0" fill="none" stroke="#fcfcfc" stroke-width="1.4" stroke-linejoin="round" stroke-linecap="round"/><polyline points="792.0,300.0 784.0,334.0" fill="none" stroke="#fcfcfc" stroke-width="1.4" stroke-linejoin="round" stroke-linecap="round"/><polyline points="825.0,304.0 820.0,330.0 807.0,365.0 810.0,399.0" fill="none" stroke="#fcfcfc" stroke-width="1.4" stroke-linejoin="round" stroke-linecap="round"/><polyline points="797.0,382.0 810.0,382.0" fill="none" stroke="#fcfcfc" stroke-width="1.2" stroke-linejoin="round" stroke-linecap="round"/><polyline points="797.0,404.0 864.0,393.0" fill="none" stroke="#fcfcfc" stroke-width="1.4" stroke-linejoin="round" stroke-linecap="round"/><polyline points="797.0,404.0 805.0,445.0" fill="none" stroke="#fcfcfc" stroke-width="1.4" stroke-linejoin="round" stroke-linecap="round"/><polyline points="684.0,417.0 716.0,427.0" fill="none" stroke="#fcfcfc" stroke-width="1.4" stroke-linejoin="round" stroke-linecap="round"/><polyline points="1099.0,182.0 1140.0,200.0 1182.0,217.0 1200.0,224.0" fill="none" stroke="#fcfcfc" stroke-width="1.8" stroke-linejoin="round" stroke-linecap="round"/><polyline points="1072.0,192.0 1088.0,212.0 1115.0,245.0 1125.0,262.0" fill="none" stroke="#fcfcfc" stroke-width="1.6" stroke-linejoin="round" stroke-linecap="round"/><polyline points="1123.0,150.0 1123.0,192.0 1126.0,212.0 1112.0,258.0" fill="none" stroke="#fcfcfc" stroke-width="1.6" stroke-linejoin="round" stroke-linecap="round"/><polyline points="1067.0,218.0 1048.0,258.0" fill="none" stroke="#fcfcfc" stroke-width="1.4" stroke-linejoin="round" stroke-linecap="round"/><polyline points="1094.0,229.0 1077.0,257.0" fill="none" stroke="#fcfcfc" stroke-width="1.4" stroke-linejoin="round" stroke-linecap="round"/><polyline points="935.0,221.0 975.0,232.0 995.0,229.0" fill="none" stroke="#fcfcfc" stroke-width="1.6" stroke-linejoin="round" stroke-linecap="round"/><polyline points="979.0,194.0 1019.0,182.0" fill="none" stroke="#fcfcfc" stroke-width="1.4" stroke-linejoin="round" stroke-linecap="round"/><polyline points="990.0,229.0 1011.0,272.0" fill="none" stroke="#fcfcfc" stroke-width="1.6" stroke-linejoin="round" stroke-linecap="round"/><polyline points="1007.0,101.0 1046.0,157.0 1060.0,175.0" fill="none" stroke="#fcfcfc" stroke-width="1.6" stroke-linejoin="round" stroke-linecap="round"/><polyline points="1078.0,65.0 1077.0,127.0" fill="none" stroke="#fcfcfc" stroke-width="1.6" stroke-linejoin="round" stroke-linecap="round"/><defs><clipPath id="bp"><polygon points="991.0,77.9 994.7,77.2 997.1,78.4 998.9,80.5 1001.2,81.8 1003.0,83.7 1005.1,85.4 1007.9,86.2 1009.5,88.4 1011.5,90.5 1011.5,93.6 1013.6,95.6 1014.5,98.2 1017.4,97.2 1020.6,98.1 1023.4,96.7 1026.4,96.9 1029.3,95.8 1031.8,97.0 1034.1,98.5 1037.0,98.9 1039.2,100.7 1041.8,99.7 1044.4,98.8 1046.6,97.1 1049.0,95.8 1050.2,93.3 1050.8,90.6 1050.6,87.7 1052.5,85.4 1053.0,82.7 1053.3,79.9 1053.6,77.2 1055.2,74.8 1056.4,77.2 1058.7,78.7 1060.1,81.0 1061.6,83.1 1063.6,84.9 1065.0,87.1 1067.5,88.5 1068.6,90.9 1070.8,92.5 1072.5,94.5 1073.6,92.0 1073.9,89.3 1072.9,86.5 1073.3,83.8 1073.8,81.2 1075.5,78.8 1075.0,76.0 1072.6,74.7 1070.5,73.0 1067.9,72.1 1065.8,70.3 1063.4,69.1 1061.1,67.7 1058.9,66.1 1061.5,63.5 1063.9,60.6 1066.8,60.7 1069.7,61.1 1072.6,60.6 1075.5,61.0 1078.3,60.7 1081.2,60.0 1082.4,62.5 1084.7,63.9 1087.2,65.1 1088.1,67.8 1089.9,69.8 1092.3,71.0 1089.8,73.7 1088.6,77.2 1085.5,77.7 1082.4,78.5 1082.0,81.2 1082.9,83.9 1081.8,86.6 1082.3,89.3 1082.4,92.0 1085.2,91.8 1088.0,91.6 1090.6,93.2 1093.4,93.6 1096.2,92.2 1098.9,93.7 1101.7,93.2 1104.5,92.9 1107.2,93.4 1109.9,94.4 1112.6,94.8 1115.5,93.5 1118.2,94.5 1120.1,96.3 1122.8,97.2 1124.4,99.5 1121.7,101.7 1119.5,104.4 1116.7,104.8 1113.8,104.0 1110.9,103.9 1108.1,104.9 1105.2,104.1 1102.4,105.5 1099.6,106.0 1096.7,105.2 1093.9,106.3 1091.0,105.6 1091.5,108.9 1091.2,112.2 1091.0,115.5 1094.7,116.3 1098.5,116.8 1098.5,120.0 1097.2,122.9 1094.4,123.9 1091.5,122.6 1088.8,123.8 1085.9,122.8 1083.1,123.1 1080.3,124.2 1077.5,124.2 1078.4,127.4 1079.1,130.7 1080.0,134.0 1082.5,135.1 1085.0,135.8 1087.6,136.6 1090.1,137.5 1092.5,138.9 1095.3,139.0 1097.9,139.7 1100.3,141.0 1103.1,141.0 1105.6,141.9 1107.7,143.9 1110.5,144.0 1113.1,144.8 1115.9,144.7 1118.2,146.4 1119.6,148.8 1120.5,151.4 1122.7,153.4 1123.0,156.4 1124.2,158.9 1126.3,160.9 1126.7,163.8 1128.1,166.2 1130.5,164.7 1133.2,163.5 1135.4,161.5 1138.2,160.6 1140.5,158.8 1143.1,158.4 1145.2,156.3 1147.6,155.6 1150.5,155.8 1153.1,155.4 1155.3,153.8 1157.5,156.0 1159.0,158.8 1160.7,161.4 1162.9,163.6 1164.5,166.3 1165.7,169.2 1166.8,172.2 1167.7,175.2 1168.5,178.3 1170.9,180.0 1173.6,181.1 1176.0,182.8 1178.0,185.0 1181.2,185.4 1183.2,187.7 1182.2,190.3 1181.0,192.9 1180.8,195.8 1180.1,198.5 1178.2,200.9 1177.8,203.7 1180.7,204.6 1183.2,206.4 1184.8,209.1 1185.4,212.2 1186.0,215.3 1188.1,217.8 1188.5,221.0 1186.4,222.9 1184.0,224.6 1181.2,225.5 1179.2,227.7 1178.2,230.1 1176.5,232.2 1176.5,235.1 1175.1,237.4 1173.8,239.7 1171.4,241.7 1168.9,243.7 1167.2,246.4 1164.4,244.5 1161.8,242.4 1161.2,245.3 1160.2,248.0 1158.5,250.4 1157.9,253.3 1155.8,255.5 1155.2,258.4 1152.6,257.3 1149.7,257.9 1147.1,257.2 1144.6,255.7 1141.8,255.7 1139.3,253.7 1136.8,251.7 1133.8,250.4 1132.4,252.9 1131.0,255.4 1129.1,257.6 1127.1,259.7 1125.3,262.1 1124.8,265.2 1123.1,267.7 1120.6,266.8 1118.3,265.5 1115.9,264.3 1113.6,263.1 1111.6,261.1 1108.6,261.1 1106.1,260.2 1104.5,257.5 1101.8,257.0 1099.8,254.8 1097.5,253.1 1094.5,252.3 1092.6,249.9 1089.8,249.0 1087.0,250.0 1085.3,252.6 1082.4,253.4 1079.9,254.9 1077.8,257.0 1075.7,259.2 1074.0,261.8 1072.5,264.5 1070.5,266.9 1068.4,269.1 1065.7,267.9 1063.2,266.5 1061.3,264.1 1058.6,262.9 1056.4,261.0 1053.8,260.2 1051.0,261.3 1048.5,259.5 1045.8,259.6 1043.1,259.7 1040.0,260.7 1037.4,262.4 1034.7,264.1 1032.4,266.4 1031.1,262.4 1033.5,260.8 1035.2,258.3 1038.3,257.7 1040.4,255.7 1040.5,252.9 1041.4,250.3 1042.7,247.7 1043.1,245.0 1041.0,243.4 1038.7,241.9 1037.2,239.6 1034.7,238.4 1032.4,237.0 1031.1,234.4 1029.9,231.8 1029.8,228.8 1028.1,226.4 1027.1,223.7 1024.8,220.7 1021.7,218.4 1019.1,219.5 1016.5,220.6 1013.7,220.8 1010.9,221.2 1008.6,223.1 1005.6,222.8 1002.8,223.4 1000.4,225.0 997.4,226.6 995.0,229.0 995.5,231.7 997.9,233.6 997.9,236.5 998.6,239.2 1001.0,241.1 1001.7,243.7 1002.7,246.2 1003.4,248.8 1004.6,251.3 1005.5,253.8 1006.1,256.5 1008.4,258.4 1009.4,260.9 1009.7,263.7 1012.5,263.5 1015.1,263.9 1017.8,264.3 1020.2,266.3 1022.9,266.6 1025.7,266.4 1024.4,269.3 1022.0,271.2 1020.4,273.8 1018.5,276.2 1016.4,278.4 1013.9,281.2 1011.1,283.7 1008.9,282.1 1006.5,280.9 1003.9,279.9 1001.7,278.4 999.1,276.6 997.0,274.2 995.0,271.7 992.4,272.7 989.7,272.3 987.0,272.3 984.4,273.3 981.8,274.1 979.1,274.3 976.4,274.3 973.7,274.4 974.3,271.8 975.1,269.1 975.0,266.4 977.1,264.4 979.8,263.2 981.7,261.0 980.9,258.3 979.6,255.7 978.5,253.1 977.7,250.4 973.7,251.7 972.2,253.9 970.4,255.9 969.3,258.4 967.4,260.4 966.2,262.8 965.0,265.3 963.1,267.2 961.3,269.3 960.7,272.1 958.7,274.0 957.2,276.2 955.0,278.0 953.4,280.1 952.7,282.9 951.0,285.0 948.2,285.6 945.7,286.9 943.6,289.0 940.9,289.9 938.7,291.6 935.6,291.7 933.2,293.1 930.5,294.0 928.3,295.8 927.9,292.9 926.9,290.3 925.7,287.7 927.8,286.1 929.3,283.9 930.5,281.4 932.9,280.1 933.9,277.5 935.9,275.7 938.5,274.6 939.3,271.8 941.7,270.4 943.2,268.0 945.2,266.1 948.2,265.2 949.3,262.4 951.1,260.3 954.1,259.5 955.2,256.7 958.1,255.7 959.9,253.6 962.1,251.9 964.3,250.2 965.7,247.7 965.6,245.0 965.7,242.3 964.1,239.8 965.1,237.0 964.4,234.4 961.4,234.0 958.4,233.3 955.3,234.1 952.4,233.0 949.8,234.2 947.2,235.5 945.6,238.5 943.0,239.7 940.4,241.0 938.4,237.6 936.3,234.4 936.1,231.6 934.3,229.2 933.3,226.5 932.7,223.8 932.3,221.0 934.8,219.9 937.2,218.7 939.3,216.9 941.7,215.7 944.4,215.5 947.0,215.5 949.7,215.7 952.5,218.2 955.0,221.0 955.2,218.0 955.0,214.9 956.1,212.0 956.4,209.0 956.3,206.1 954.5,203.7 953.7,201.0 955.4,198.8 955.8,195.9 958.0,194.0 959.5,191.6 960.4,189.0 963.3,188.9 966.1,188.3 969.0,187.8 971.9,187.7 974.8,187.8 977.5,186.1 980.4,186.3 982.0,183.2 985.1,181.3 987.0,178.3 988.4,175.5 988.4,172.3 988.9,169.3 989.7,166.3 990.4,163.2 989.8,160.0 990.3,156.9 991.0,153.8 993.7,153.3 996.4,154.0 999.2,153.5 1001.9,153.3 1004.6,153.8 1004.6,150.9 1004.7,148.0 1003.2,145.4 1003.5,142.4 1002.7,139.7 1003.1,136.7 1002.1,134.0 999.2,132.9 996.0,132.4 993.1,131.5 990.0,130.9 987.3,129.1 986.9,126.5 986.3,123.9 985.5,121.4 985.4,118.7 984.9,116.1 985.3,113.4 983.8,110.9 984.9,108.1 983.6,105.6 985.7,104.0 987.9,102.6 989.9,100.8 992.4,99.7 994.5,98.1 996.3,96.2 998.4,94.5 997.1,91.7 996.3,88.8 995.3,85.9 993.3,83.5 992.6,80.5"/></clipPath></defs><polygon points="991.0,77.9 994.7,77.2 997.1,78.4 998.9,80.5 1001.2,81.8 1003.0,83.7 1005.1,85.4 1007.9,86.2 1009.5,88.4 1011.5,90.5 1011.5,93.6 1013.6,95.6 1014.5,98.2 1017.4,97.2 1020.6,98.1 1023.4,96.7 1026.4,96.9 1029.3,95.8 1031.8,97.0 1034.1,98.5 1037.0,98.9 1039.2,100.7 1041.8,99.7 1044.4,98.8 1046.6,97.1 1049.0,95.8 1050.2,93.3 1050.8,90.6 1050.6,87.7 1052.5,85.4 1053.0,82.7 1053.3,79.9 1053.6,77.2 1055.2,74.8 1056.4,77.2 1058.7,78.7 1060.1,81.0 1061.6,83.1 1063.6,84.9 1065.0,87.1 1067.5,88.5 1068.6,90.9 1070.8,92.5 1072.5,94.5 1073.6,92.0 1073.9,89.3 1072.9,86.5 1073.3,83.8 1073.8,81.2 1075.5,78.8 1075.0,76.0 1072.6,74.7 1070.5,73.0 1067.9,72.1 1065.8,70.3 1063.4,69.1 1061.1,67.7 1058.9,66.1 1061.5,63.5 1063.9,60.6 1066.8,60.7 1069.7,61.1 1072.6,60.6 1075.5,61.0 1078.3,60.7 1081.2,60.0 1082.4,62.5 1084.7,63.9 1087.2,65.1 1088.1,67.8 1089.9,69.8 1092.3,71.0 1089.8,73.7 1088.6,77.2 1085.5,77.7 1082.4,78.5 1082.0,81.2 1082.9,83.9 1081.8,86.6 1082.3,89.3 1082.4,92.0 1085.2,91.8 1088.0,91.6 1090.6,93.2 1093.4,93.6 1096.2,92.2 1098.9,93.7 1101.7,93.2 1104.5,92.9 1107.2,93.4 1109.9,94.4 1112.6,94.8 1115.5,93.5 1118.2,94.5 1120.1,96.3 1122.8,97.2 1124.4,99.5 1121.7,101.7 1119.5,104.4 1116.7,104.8 1113.8,104.0 1110.9,103.9 1108.1,104.9 1105.2,104.1 1102.4,105.5 1099.6,106.0 1096.7,105.2 1093.9,106.3 1091.0,105.6 1091.5,108.9 1091.2,112.2 1091.0,115.5 1094.7,116.3 1098.5,116.8 1098.5,120.0 1097.2,122.9 1094.4,123.9 1091.5,122.6 1088.8,123.8 1085.9,122.8 1083.1,123.1 1080.3,124.2 1077.5,124.2 1078.4,127.4 1079.1,130.7 1080.0,134.0 1082.5,135.1 1085.0,135.8 1087.6,136.6 1090.1,137.5 1092.5,138.9 1095.3,139.0 1097.9,139.7 1100.3,141.0 1103.1,141.0 1105.6,141.9 1107.7,143.9 1110.5,144.0 1113.1,144.8 1115.9,144.7 1118.2,146.4 1119.6,148.8 1120.5,151.4 1122.7,153.4 1123.0,156.4 1124.2,158.9 1126.3,160.9 1126.7,163.8 1128.1,166.2 1130.5,164.7 1133.2,163.5 1135.4,161.5 1138.2,160.6 1140.5,158.8 1143.1,158.4 1145.2,156.3 1147.6,155.6 1150.5,155.8 1153.1,155.4 1155.3,153.8 1157.5,156.0 1159.0,158.8 1160.7,161.4 1162.9,163.6 1164.5,166.3 1165.7,169.2 1166.8,172.2 1167.7,175.2 1168.5,178.3 1170.9,180.0 1173.6,181.1 1176.0,182.8 1178.0,185.0 1181.2,185.4 1183.2,187.7 1182.2,190.3 1181.0,192.9 1180.8,195.8 1180.1,198.5 1178.2,200.9 1177.8,203.7 1180.7,204.6 1183.2,206.4 1184.8,209.1 1185.4,212.2 1186.0,215.3 1188.1,217.8 1188.5,221.0 1186.4,222.9 1184.0,224.6 1181.2,225.5 1179.2,227.7 1178.2,230.1 1176.5,232.2 1176.5,235.1 1175.1,237.4 1173.8,239.7 1171.4,241.7 1168.9,243.7 1167.2,246.4 1164.4,244.5 1161.8,242.4 1161.2,245.3 1160.2,248.0 1158.5,250.4 1157.9,253.3 1155.8,255.5 1155.2,258.4 1152.6,257.3 1149.7,257.9 1147.1,257.2 1144.6,255.7 1141.8,255.7 1139.3,253.7 1136.8,251.7 1133.8,250.4 1132.4,252.9 1131.0,255.4 1129.1,257.6 1127.1,259.7 1125.3,262.1 1124.8,265.2 1123.1,267.7 1120.6,266.8 1118.3,265.5 1115.9,264.3 1113.6,263.1 1111.6,261.1 1108.6,261.1 1106.1,260.2 1104.5,257.5 1101.8,257.0 1099.8,254.8 1097.5,253.1 1094.5,252.3 1092.6,249.9 1089.8,249.0 1087.0,250.0 1085.3,252.6 1082.4,253.4 1079.9,254.9 1077.8,257.0 1075.7,259.2 1074.0,261.8 1072.5,264.5 1070.5,266.9 1068.4,269.1 1065.7,267.9 1063.2,266.5 1061.3,264.1 1058.6,262.9 1056.4,261.0 1053.8,260.2 1051.0,261.3 1048.5,259.5 1045.8,259.6 1043.1,259.7 1040.0,260.7 1037.4,262.4 1034.7,264.1 1032.4,266.4 1031.1,262.4 1033.5,260.8 1035.2,258.3 1038.3,257.7 1040.4,255.7 1040.5,252.9 1041.4,250.3 1042.7,247.7 1043.1,245.0 1041.0,243.4 1038.7,241.9 1037.2,239.6 1034.7,238.4 1032.4,237.0 1031.1,234.4 1029.9,231.8 1029.8,228.8 1028.1,226.4 1027.1,223.7 1024.8,220.7 1021.7,218.4 1019.1,219.5 1016.5,220.6 1013.7,220.8 1010.9,221.2 1008.6,223.1 1005.6,222.8 1002.8,223.4 1000.4,225.0 997.4,226.6 995.0,229.0 995.5,231.7 997.9,233.6 997.9,236.5 998.6,239.2 1001.0,241.1 1001.7,243.7 1002.7,246.2 1003.4,248.8 1004.6,251.3 1005.5,253.8 1006.1,256.5 1008.4,258.4 1009.4,260.9 1009.7,263.7 1012.5,263.5 1015.1,263.9 1017.8,264.3 1020.2,266.3 1022.9,266.6 1025.7,266.4 1024.4,269.3 1022.0,271.2 1020.4,273.8 1018.5,276.2 1016.4,278.4 1013.9,281.2 1011.1,283.7 1008.9,282.1 1006.5,280.9 1003.9,279.9 1001.7,278.4 999.1,276.6 997.0,274.2 995.0,271.7 992.4,272.7 989.7,272.3 987.0,272.3 984.4,273.3 981.8,274.1 979.1,274.3 976.4,274.3 973.7,274.4 974.3,271.8 975.1,269.1 975.0,266.4 977.1,264.4 979.8,263.2 981.7,261.0 980.9,258.3 979.6,255.7 978.5,253.1 977.7,250.4 973.7,251.7 972.2,253.9 970.4,255.9 969.3,258.4 967.4,260.4 966.2,262.8 965.0,265.3 963.1,267.2 961.3,269.3 960.7,272.1 958.7,274.0 957.2,276.2 955.0,278.0 953.4,280.1 952.7,282.9 951.0,285.0 948.2,285.6 945.7,286.9 943.6,289.0 940.9,289.9 938.7,291.6 935.6,291.7 933.2,293.1 930.5,294.0 928.3,295.8 927.9,292.9 926.9,290.3 925.7,287.7 927.8,286.1 929.3,283.9 930.5,281.4 932.9,280.1 933.9,277.5 935.9,275.7 938.5,274.6 939.3,271.8 941.7,270.4 943.2,268.0 945.2,266.1 948.2,265.2 949.3,262.4 951.1,260.3 954.1,259.5 955.2,256.7 958.1,255.7 959.9,253.6 962.1,251.9 964.3,250.2 965.7,247.7 965.6,245.0 965.7,242.3 964.1,239.8 965.1,237.0 964.4,234.4 961.4,234.0 958.4,233.3 955.3,234.1 952.4,233.0 949.8,234.2 947.2,235.5 945.6,238.5 943.0,239.7 940.4,241.0 938.4,237.6 936.3,234.4 936.1,231.6 934.3,229.2 933.3,226.5 932.7,223.8 932.3,221.0 934.8,219.9 937.2,218.7 939.3,216.9 941.7,215.7 944.4,215.5 947.0,215.5 949.7,215.7 952.5,218.2 955.0,221.0 955.2,218.0 955.0,214.9 956.1,212.0 956.4,209.0 956.3,206.1 954.5,203.7 953.7,201.0 955.4,198.8 955.8,195.9 958.0,194.0 959.5,191.6 960.4,189.0 963.3,188.9 966.1,188.3 969.0,187.8 971.9,187.7 974.8,187.8 977.5,186.1 980.4,186.3 982.0,183.2 985.1,181.3 987.0,178.3 988.4,175.5 988.4,172.3 988.9,169.3 989.7,166.3 990.4,163.2 989.8,160.0 990.3,156.9 991.0,153.8 993.7,153.3 996.4,154.0 999.2,153.5 1001.9,153.3 1004.6,153.8 1004.6,150.9 1004.7,148.0 1003.2,145.4 1003.5,142.4 1002.7,139.7 1003.1,136.7 1002.1,134.0 999.2,132.9 996.0,132.4 993.1,131.5 990.0,130.9 987.3,129.1 986.9,126.5 986.3,123.9 985.5,121.4 985.4,118.7 984.9,116.1 985.3,113.4 983.8,110.9 984.9,108.1 983.6,105.6 985.7,104.0 987.9,102.6 989.9,100.8 992.4,99.7 994.5,98.1 996.3,96.2 998.4,94.5 997.1,91.7 996.3,88.8 995.3,85.9 993.3,83.5 992.6,80.5" fill="#61a4c9" stroke="#2a4f6a" stroke-width="1.1" stroke-linejoin="round"/><g clip-path="url(#bp)"><polyline points="502.0,66.0 528.0,73.0 545.0,73.0 562.0,79.0 582.0,87.0 612.0,97.0 637.0,109.0 663.0,126.0 684.0,143.0 704.0,152.0 707.0,165.0 715.0,175.0 734.0,190.0 757.0,203.0 773.0,218.0 779.0,242.0 783.0,252.0" fill="none" stroke="#7ab4d6" stroke-width="2.9" stroke-linejoin="round" opacity="0.7"/><polyline points="580.0,53.0 569.0,79.0 554.0,107.0 543.0,117.0 528.0,115.0 502.0,111.0" fill="none" stroke="#7ab4d6" stroke-width="2.9" stroke-linejoin="round" opacity="0.7"/><polyline points="528.0,73.0 513.0,111.0 512.0,240.0 502.0,250.0" fill="none" stroke="#7ab4d6" stroke-width="1.9" stroke-linejoin="round" opacity="0.7"/><polyline points="519.0,53.0 519.0,70.0" fill="none" stroke="#7ab4d6" stroke-width="1.6" stroke-linejoin="round" opacity="0.7"/><polyline points="727.0,58.0 775.0,94.0 852.0,158.0 930.0,212.0 985.0,248.0 1040.0,290.0" fill="none" stroke="#7ab4d6" stroke-width="1.9" stroke-linejoin="round" opacity="0.7"/><polyline points="820.0,54.0 918.0,126.0 980.0,170.0" fill="none" stroke="#7ab4d6" stroke-width="1.8" stroke-linejoin="round" opacity="0.7"/><polyline points="930.0,96.0 920.0,124.0 914.0,150.0 897.0,175.0 875.0,195.0 832.0,212.0 796.0,227.0 772.0,237.0 762.0,250.0 760.0,270.0 760.0,291.0" fill="none" stroke="#7ab4d6" stroke-width="2.9" stroke-linejoin="round" opacity="0.7"/><polyline points="710.0,252.0 757.0,251.0 805.0,254.0 860.0,260.0 865.0,270.0" fill="none" stroke="#7ab4d6" stroke-width="1.9" stroke-linejoin="round" opacity="0.7"/><polyline points="676.0,138.0 620.0,218.0 600.0,250.0" fill="none" stroke="#7ab4d6" stroke-width="1.3" stroke-linejoin="round" opacity="0.7"/><polyline points="650.0,165.0 687.0,192.0 723.0,201.0" fill="none" stroke="#7ab4d6" stroke-width="1.3" stroke-linejoin="round" opacity="0.7"/><polyline points="687.0,192.0 676.0,237.0 667.0,270.0" fill="none" stroke="#7ab4d6" stroke-width="1.3" stroke-linejoin="round" opacity="0.7"/><polyline points="515.0,153.0 534.0,154.0 558.0,159.0 558.0,175.0 575.0,192.0 592.0,199.0 620.0,218.0 635.0,233.0 637.0,270.0" fill="none" stroke="#7ab4d6" stroke-width="1.1" stroke-linejoin="round" opacity="0.7"/><polyline points="710.0,220.0 710.0,252.0" fill="none" stroke="#7ab4d6" stroke-width="1.3" stroke-linejoin="round" opacity="0.7"/><polyline points="981.0,55.0 977.0,60.0 943.0,85.0 926.0,109.0 917.0,143.0 909.0,165.0 900.0,173.0" fill="none" stroke="#7ab4d6" stroke-width="2.9" stroke-linejoin="round" opacity="0.7"/><polyline points="981.0,61.0 1029.0,66.0 1093.0,74.0 1136.0,83.0 1190.0,102.0 1222.0,115.0 1239.0,135.0 1241.0,154.0 1243.0,182.0 1243.0,270.0 1243.0,300.0" fill="none" stroke="#7ab4d6" stroke-width="3.4" stroke-linejoin="round" opacity="0.7"/><polyline points="1239.0,154.0 1330.0,182.0 1420.0,190.0 1493.0,203.0 1590.0,212.0 1675.0,233.0 1730.0,250.0 1765.0,254.0 1807.0,259.0 1829.0,270.0 1873.0,309.0 1917.0,322.0 1949.0,339.0 1955.0,356.0 2031.0,417.0 2096.0,470.0" fill="none" stroke="#7ab4d6" stroke-width="3.2" stroke-linejoin="round" opacity="0.7"/><polyline points="1243.0,177.0 1300.0,172.0 1343.0,184.0" fill="none" stroke="#7ab4d6" stroke-width="1.9" stroke-linejoin="round" opacity="0.7"/><polyline points="1185.0,220.0 1222.0,240.0 1230.0,270.0" fill="none" stroke="#7ab4d6" stroke-width="1.6" stroke-linejoin="round" opacity="0.7"/><polyline points="1308.0,55.0 1292.0,169.0 1280.0,250.0 1270.0,300.0" fill="none" stroke="#7ab4d6" stroke-width="1.6" stroke-linejoin="round" opacity="0.7"/><polyline points="900.0,173.0 971.0,229.0 1000.0,250.0" fill="none" stroke="#7ab4d6" stroke-width="1.4" stroke-linejoin="round" opacity="0.7"/><polyline points="502.0,279.0 662.0,280.0 760.0,291.0 846.0,304.0 930.0,317.0 986.0,323.0 1030.0,320.0 1095.0,332.0 1160.0,347.0 1203.0,341.0 1257.0,328.0 1300.0,314.0 1361.0,323.0 1480.0,305.0 1590.0,304.0 1730.0,298.0 1819.0,294.0 1873.0,309.0" fill="none" stroke="#7ab4d6" stroke-width="3.4" stroke-linejoin="round" opacity="0.7"/><polyline points="900.0,339.0 1015.0,328.0 1052.0,349.0 1138.0,356.0 1160.0,350.0" fill="none" stroke="#7ab4d6" stroke-width="1.9" stroke-linejoin="round" opacity="0.7"/><polyline points="502.0,421.0 556.0,391.0 600.0,356.0 660.0,278.0 665.0,265.0" fill="none" stroke="#7ab4d6" stroke-width="2.1" stroke-linejoin="round" opacity="0.7"/><polyline points="760.0,265.0 745.0,373.0 723.0,412.0 708.0,460.0 706.0,484.0" fill="none" stroke="#7ab4d6" stroke-width="2.1" stroke-linejoin="round" opacity="0.7"/><polyline points="727.0,484.0 825.0,438.0 868.0,412.0 930.0,382.0 965.0,356.0 1019.0,321.0" fill="none" stroke="#7ab4d6" stroke-width="2.2" stroke-linejoin="round" opacity="0.7"/><polyline points="920.0,326.0 885.0,362.0 864.0,399.0 872.0,434.0 890.0,484.0" fill="none" stroke="#7ab4d6" stroke-width="2.1" stroke-linejoin="round" opacity="0.7"/><polyline points="900.0,400.0 987.0,367.0 1008.0,343.0" fill="none" stroke="#7ab4d6" stroke-width="1.4" stroke-linejoin="round" opacity="0.7"/><polyline points="900.0,352.0 943.0,373.0 1052.0,438.0 1138.0,484.0" fill="none" stroke="#7ab4d6" stroke-width="1.9" stroke-linejoin="round" opacity="0.7"/><polyline points="900.0,432.0 982.0,406.0 1052.0,369.0" fill="none" stroke="#7ab4d6" stroke-width="1.4" stroke-linejoin="round" opacity="0.7"/><polyline points="1155.0,369.0 1160.0,427.0 1155.0,484.0" fill="none" stroke="#7ab4d6" stroke-width="1.8" stroke-linejoin="round" opacity="0.7"/><polyline points="1203.0,330.0 1207.0,484.0" fill="none" stroke="#7ab4d6" stroke-width="1.4" stroke-linejoin="round" opacity="0.7"/><polyline points="1125.0,265.0 1171.0,336.0" fill="none" stroke="#7ab4d6" stroke-width="1.4" stroke-linejoin="round" opacity="0.7"/><polyline points="1015.0,285.0 1030.0,319.0" fill="none" stroke="#7ab4d6" stroke-width="1.3" stroke-linejoin="round" opacity="0.7"/><polyline points="1073.0,265.0 1099.0,295.0 1084.0,326.0" fill="none" stroke="#7ab4d6" stroke-width="1.3" stroke-linejoin="round" opacity="0.7"/><polyline points="1158.0,434.0 1330.0,453.0" fill="none" stroke="#7ab4d6" stroke-width="1.4" stroke-linejoin="round" opacity="0.7"/><polyline points="1138.0,436.0 1201.0,484.0" fill="none" stroke="#7ab4d6" stroke-width="1.4" stroke-linejoin="round" opacity="0.7"/><polyline points="1125.0,442.0 1101.0,484.0" fill="none" stroke="#7ab4d6" stroke-width="1.3" stroke-linejoin="round" opacity="0.7"/><polyline points="1049.0,445.0 1049.0,484.0" fill="none" stroke="#7ab4d6" stroke-width="1.3" stroke-linejoin="round" opacity="0.7"/><polyline points="1300.0,408.0 1382.0,408.0" fill="none" stroke="#7ab4d6" stroke-width="1.8" stroke-linejoin="round" opacity="0.7"/><polyline points="1334.0,345.0 1478.0,305.0" fill="none" stroke="#7ab4d6" stroke-width="2.6" stroke-linejoin="round" opacity="0.7"/><polyline points="1335.0,347.0 1404.0,375.0 1447.0,356.0 1445.0,350.0" fill="none" stroke="#7ab4d6" stroke-width="1.4" stroke-linejoin="round" opacity="0.7"/><polyline points="1417.0,280.0 1436.0,330.0 1478.0,391.0 1506.0,436.0 1560.0,484.0" fill="none" stroke="#7ab4d6" stroke-width="1.8" stroke-linejoin="round" opacity="0.7"/><polyline points="1343.0,352.0 1389.0,417.0 1393.0,484.0" fill="none" stroke="#7ab4d6" stroke-width="1.8" stroke-linejoin="round" opacity="0.7"/><polyline points="1395.0,440.0 1506.0,436.0 1562.0,430.0 1616.0,430.0" fill="none" stroke="#7ab4d6" stroke-width="1.6" stroke-linejoin="round" opacity="0.7"/><polyline points="1519.0,306.0 1519.0,378.0 1484.0,399.0" fill="none" stroke="#7ab4d6" stroke-width="1.4" stroke-linejoin="round" opacity="0.7"/><polyline points="1519.0,371.0 1577.0,373.0" fill="none" stroke="#7ab4d6" stroke-width="1.3" stroke-linejoin="round" opacity="0.7"/><polyline points="1519.0,343.0 1579.0,354.0 1620.0,334.0" fill="none" stroke="#7ab4d6" stroke-width="1.3" stroke-linejoin="round" opacity="0.7"/><polyline points="1724.0,358.0 1625.0,425.0 1605.0,449.0 1603.0,484.0" fill="none" stroke="#7ab4d6" stroke-width="1.6" stroke-linejoin="round" opacity="0.7"/><polyline points="1730.0,326.0 1651.0,358.0 1588.0,421.0 1586.0,438.0" fill="none" stroke="#7ab4d6" stroke-width="1.4" stroke-linejoin="round" opacity="0.7"/><polyline points="1618.0,334.0 1668.0,399.0 1724.0,453.0" fill="none" stroke="#7ab4d6" stroke-width="1.3" stroke-linejoin="round" opacity="0.7"/><polyline points="1730.0,410.0 1651.0,471.0" fill="none" stroke="#7ab4d6" stroke-width="1.4" stroke-linejoin="round" opacity="0.7"/><polyline points="1360.0,55.0 1343.0,203.0 1339.0,270.0" fill="none" stroke="#7ab4d6" stroke-width="1.8" stroke-linejoin="round" opacity="0.7"/><polyline points="1311.0,55.0 1300.0,126.0" fill="none" stroke="#7ab4d6" stroke-width="1.4" stroke-linejoin="round" opacity="0.7"/><polyline points="1465.0,55.0 1476.0,182.0 1478.0,270.0 1479.0,305.0" fill="none" stroke="#7ab4d6" stroke-width="1.8" stroke-linejoin="round" opacity="0.7"/><polyline points="1467.0,85.0 1519.0,55.0" fill="none" stroke="#7ab4d6" stroke-width="1.3" stroke-linejoin="round" opacity="0.7"/><polyline points="1577.0,55.0 1630.0,96.0 1617.0,139.0 1628.0,218.0" fill="none" stroke="#7ab4d6" stroke-width="1.4" stroke-linejoin="round" opacity="0.7"/><polyline points="1630.0,96.0 1730.0,90.0 1818.0,66.0 1876.0,54.0" fill="none" stroke="#7ab4d6" stroke-width="1.4" stroke-linejoin="round" opacity="0.7"/><polyline points="1394.0,96.0 1369.0,154.0 1375.0,182.0" fill="none" stroke="#7ab4d6" stroke-width="1.3" stroke-linejoin="round" opacity="0.7"/><polyline points="1394.0,96.0 1429.0,124.0 1437.0,156.0 1467.0,173.0" fill="none" stroke="#7ab4d6" stroke-width="1.3" stroke-linejoin="round" opacity="0.7"/><polyline points="1418.0,62.0 1394.0,96.0" fill="none" stroke="#7ab4d6" stroke-width="1.3" stroke-linejoin="round" opacity="0.7"/><polyline points="1429.0,244.0 1534.0,248.0 1562.0,218.0" fill="none" stroke="#7ab4d6" stroke-width="1.4" stroke-linejoin="round" opacity="0.7"/><polyline points="1534.0,248.0 1547.0,270.0" fill="none" stroke="#7ab4d6" stroke-width="1.3" stroke-linejoin="round" opacity="0.7"/><polyline points="1424.0,242.0 1416.0,270.0" fill="none" stroke="#7ab4d6" stroke-width="1.3" stroke-linejoin="round" opacity="0.7"/><polyline points="1585.0,246.0 1622.0,222.0" fill="none" stroke="#7ab4d6" stroke-width="1.3" stroke-linejoin="round" opacity="0.7"/><polyline points="1872.0,216.0 1930.0,188.0 1949.0,201.0 1977.0,218.0 2000.0,212.0 2030.0,220.0" fill="none" stroke="#7ab4d6" stroke-width="1.6" stroke-linejoin="round" opacity="0.7"/><polyline points="1872.0,203.0 1882.0,192.0 1900.0,199.0" fill="none" stroke="#7ab4d6" stroke-width="1.3" stroke-linejoin="round" opacity="0.7"/><polyline points="1949.0,201.0 1987.0,156.0" fill="none" stroke="#7ab4d6" stroke-width="1.3" stroke-linejoin="round" opacity="0.7"/><polyline points="1979.0,55.0 1966.0,126.0 1992.0,147.0 1998.0,173.0 2030.0,199.0" fill="none" stroke="#7ab4d6" stroke-width="1.3" stroke-linejoin="round" opacity="0.7"/><polyline points="2007.0,128.0 2011.0,81.0 2041.0,59.0 2050.0,62.0 2060.0,55.0" fill="none" stroke="#7ab4d6" stroke-width="1.3" stroke-linejoin="round" opacity="0.7"/><polyline points="2071.0,167.0 2095.0,137.0" fill="none" stroke="#7ab4d6" stroke-width="1.3" stroke-linejoin="round" opacity="0.7"/><polyline points="1975.0,270.0 2030.0,216.0" fill="none" stroke="#7ab4d6" stroke-width="1.6" stroke-linejoin="round" opacity="0.7"/><polyline points="1700.0,423.0 1787.0,386.0 1862.0,347.0 1873.0,315.0 1880.0,291.0 1890.0,278.0 1873.0,265.0 1859.0,257.0" fill="none" stroke="#7ab4d6" stroke-width="2.7" stroke-linejoin="round" opacity="0.7"/><polyline points="1830.0,272.0 1847.0,265.0" fill="none" stroke="#7ab4d6" stroke-width="1.6" stroke-linejoin="round" opacity="0.7"/><polyline points="1832.0,272.0 1830.0,295.0" fill="none" stroke="#7ab4d6" stroke-width="1.6" stroke-linejoin="round" opacity="0.7"/><polyline points="1913.0,321.0 1981.0,265.0 2023.0,219.0 2096.0,138.0" fill="none" stroke="#7ab4d6" stroke-width="1.9" stroke-linejoin="round" opacity="0.7"/><polyline points="1910.0,326.0 1901.0,373.0 1893.0,451.0 1890.0,484.0" fill="none" stroke="#7ab4d6" stroke-width="1.9" stroke-linejoin="round" opacity="0.7"/><polyline points="1700.0,375.0 1791.0,317.0 1806.0,295.0" fill="none" stroke="#7ab4d6" stroke-width="1.9" stroke-linejoin="round" opacity="0.7"/><polyline points="1700.0,330.0 1748.0,323.0 1765.0,336.0 1793.0,384.0 1793.0,484.0" fill="none" stroke="#7ab4d6" stroke-width="1.4" stroke-linejoin="round" opacity="0.7"/><polyline points="1765.0,343.0 1793.0,330.0 1843.0,345.0 1852.0,352.0" fill="none" stroke="#7ab4d6" stroke-width="1.3" stroke-linejoin="round" opacity="0.7"/><polyline points="1730.0,386.0 1813.0,339.0" fill="none" stroke="#7ab4d6" stroke-width="1.3" stroke-linejoin="round" opacity="0.7"/><polyline points="1715.0,367.0 1739.0,404.0" fill="none" stroke="#7ab4d6" stroke-width="1.3" stroke-linejoin="round" opacity="0.7"/><polyline points="1700.0,427.0 1793.0,434.0" fill="none" stroke="#7ab4d6" stroke-width="1.4" stroke-linejoin="round" opacity="0.7"/><polyline points="1878.0,460.0 1917.0,448.0 1981.0,456.0 2030.0,465.0" fill="none" stroke="#7ab4d6" stroke-width="1.9" stroke-linejoin="round" opacity="0.7"/><polyline points="1953.0,356.0 1940.0,386.0 1951.0,432.0 1977.0,417.0 2001.0,378.0 1992.0,347.0 1960.0,287.0" fill="none" stroke="#7ab4d6" stroke-width="1.3" stroke-linejoin="round" opacity="0.7"/><polyline points="1997.0,265.0 2012.0,313.0 2031.0,319.0 2072.0,313.0 2096.0,308.0" fill="none" stroke="#7ab4d6" stroke-width="1.3" stroke-linejoin="round" opacity="0.7"/><polyline points="1859.0,257.0 1800.0,300.0 1760.0,330.0" fill="none" stroke="#7ab4d6" stroke-width="1.3" stroke-linejoin="round" opacity="0.7"/><polyline points="1649.0,232.0 1657.0,258.0 1683.0,270.0 1717.0,270.0 1760.0,258.0 1777.0,253.0" fill="none" stroke="#7ab4d6" stroke-width="1.1" stroke-linejoin="round" opacity="0.7"/><polyline points="1760.0,258.0 1769.0,292.0" fill="none" stroke="#7ab4d6" stroke-width="1.0" stroke-linejoin="round" opacity="0.7"/><polyline points="1717.0,253.0 1722.0,296.0" fill="none" stroke="#7ab4d6" stroke-width="1.0" stroke-linejoin="round" opacity="0.7"/><polyline points="1688.0,249.0 1683.0,270.0" fill="none" stroke="#7ab4d6" stroke-width="1.0" stroke-linejoin="round" opacity="0.7"/><polyline points="1696.0,270.0 1692.0,296.0" fill="none" stroke="#7ab4d6" stroke-width="1.0" stroke-linejoin="round" opacity="0.7"/><polyline points="1811.0,262.0 1828.0,292.0" fill="none" stroke="#7ab4d6" stroke-width="1.0" stroke-linejoin="round" opacity="0.7"/><polyline points="1590.0,245.0 1530.0,300.0" fill="none" stroke="#7ab4d6" stroke-width="1.1" stroke-linejoin="round" opacity="0.7"/><polyline points="1539.0,287.0 1607.0,253.0" fill="none" stroke="#7ab4d6" stroke-width="1.1" stroke-linejoin="round" opacity="0.7"/><polyline points="1560.0,215.0 1534.0,245.0 1432.0,245.0" fill="none" stroke="#7ab4d6" stroke-width="1.3" stroke-linejoin="round" opacity="0.7"/><polyline points="1551.0,200.0 1564.0,215.0" fill="none" stroke="#7ab4d6" stroke-width="1.1" stroke-linejoin="round" opacity="0.7"/><polyline points="1745.0,225.0 1790.0,240.0" fill="none" stroke="#7ab4d6" stroke-width="1.0" stroke-linejoin="round" opacity="0.7"/><polyline points="721.0,289.0 716.0,313.0 703.0,315.0 701.0,362.0 742.0,367.0" fill="none" stroke="#7ab4d6" stroke-width="1.1" stroke-linejoin="round" opacity="0.7"/><polyline points="703.0,328.0 749.0,334.0 781.0,334.0 822.0,326.0" fill="none" stroke="#7ab4d6" stroke-width="1.1" stroke-linejoin="round" opacity="0.7"/><polyline points="792.0,300.0 784.0,334.0" fill="none" stroke="#7ab4d6" stroke-width="1.1" stroke-linejoin="round" opacity="0.7"/><polyline points="825.0,304.0 820.0,330.0 807.0,365.0 810.0,399.0" fill="none" stroke="#7ab4d6" stroke-width="1.1" stroke-linejoin="round" opacity="0.7"/><polyline points="797.0,382.0 810.0,382.0" fill="none" stroke="#7ab4d6" stroke-width="1.0" stroke-linejoin="round" opacity="0.7"/><polyline points="797.0,404.0 864.0,393.0" fill="none" stroke="#7ab4d6" stroke-width="1.1" stroke-linejoin="round" opacity="0.7"/><polyline points="797.0,404.0 805.0,445.0" fill="none" stroke="#7ab4d6" stroke-width="1.1" stroke-linejoin="round" opacity="0.7"/><polyline points="684.0,417.0 716.0,427.0" fill="none" stroke="#7ab4d6" stroke-width="1.1" stroke-linejoin="round" opacity="0.7"/><polyline points="1099.0,182.0 1140.0,200.0 1182.0,217.0 1200.0,224.0" fill="none" stroke="#7ab4d6" stroke-width="1.4" stroke-linejoin="round" opacity="0.7"/><polyline points="1072.0,192.0 1088.0,212.0 1115.0,245.0 1125.0,262.0" fill="none" stroke="#7ab4d6" stroke-width="1.3" stroke-linejoin="round" opacity="0.7"/><polyline points="1123.0,150.0 1123.0,192.0 1126.0,212.0 1112.0,258.0" fill="none" stroke="#7ab4d6" stroke-width="1.3" stroke-linejoin="round" opacity="0.7"/><polyline points="1067.0,218.0 1048.0,258.0" fill="none" stroke="#7ab4d6" stroke-width="1.1" stroke-linejoin="round" opacity="0.7"/><polyline points="1094.0,229.0 1077.0,257.0" fill="none" stroke="#7ab4d6" stroke-width="1.1" stroke-linejoin="round" opacity="0.7"/><polyline points="935.0,221.0 975.0,232.0 995.0,229.0" fill="none" stroke="#7ab4d6" stroke-width="1.3" stroke-linejoin="round" opacity="0.7"/><polyline points="979.0,194.0 1019.0,182.0" fill="none" stroke="#7ab4d6" stroke-width="1.1" stroke-linejoin="round" opacity="0.7"/><polyline points="990.0,229.0 1011.0,272.0" fill="none" stroke="#7ab4d6" stroke-width="1.3" stroke-linejoin="round" opacity="0.7"/><polyline points="1007.0,101.0 1046.0,157.0 1060.0,175.0" fill="none" stroke="#7ab4d6" stroke-width="1.3" stroke-linejoin="round" opacity="0.7"/><polyline points="1078.0,65.0 1077.0,127.0" fill="none" stroke="#7ab4d6" stroke-width="1.3" stroke-linejoin="round" opacity="0.7"/></g><polygon points="1022.5,118.9 1024.3,121.0 1026.1,123.1 1027.9,125.2 1029.7,127.3 1032.2,128.7 1035.2,129.2 1038.3,129.6 1041.3,128.1 1044.4,129.0 1047.4,129.1 1050.4,130.4 1053.7,130.3 1056.7,131.2 1060.0,131.0 1062.4,132.7 1063.8,135.2 1066.0,137.1 1067.5,139.6 1069.4,141.8 1071.4,143.8 1070.7,141.1 1071.1,138.4 1071.4,135.8 1072.7,133.2 1072.5,130.5 1071.6,127.7 1072.3,125.1 1074.9,123.3 1076.7,120.7 1079.4,125.1 1079.4,128.5 1078.0,131.6 1077.6,134.9 1077.2,138.0 1076.3,140.9 1073.8,143.2 1073.8,146.4 1072.3,149.1 1074.0,151.4 1074.1,154.6 1075.5,157.1 1077.7,159.2 1077.9,162.3 1079.9,164.5 1081.2,167.0 1081.2,170.0 1081.8,173.0 1084.5,173.6 1086.4,176.0 1089.0,176.7 1091.3,178.2 1093.8,179.2 1096.5,179.7 1096.2,183.1 1095.1,186.3 1092.4,186.2 1089.7,186.2 1087.0,186.0 1084.4,185.0 1081.9,186.4 1079.2,186.6 1076.4,186.7 1074.0,188.3 1071.0,187.8 1068.5,189.0 1065.8,189.6 1063.0,189.4 1060.5,190.6 1057.9,191.5 1055.1,191.8 1052.4,192.0 1049.8,193.0 1048.8,196.1 1045.7,197.9 1045.5,201.5 1043.1,203.7 1040.2,203.0 1037.3,202.6 1034.3,203.9 1031.5,202.3 1028.6,202.9 1025.7,202.4 1023.0,203.6 1020.4,205.0 1017.6,203.9 1015.4,202.1 1013.7,199.7 1011.6,201.4 1008.5,201.4 1006.7,203.8 1003.9,204.1 1001.4,205.0 998.9,206.2 997.0,208.4 994.6,209.5 992.1,210.5 989.7,211.7 987.5,213.4 986.7,216.2 984.0,217.4 982.2,219.3 980.3,221.3 979.0,223.7 976.4,219.7 976.5,217.0 978.9,215.1 978.4,212.1 979.7,209.8 981.0,207.5 981.7,205.0 984.5,204.6 986.6,202.6 989.5,202.5 991.7,200.8 994.0,199.4 996.5,198.3 998.9,197.0 1001.3,195.8 1003.8,194.8 1006.7,194.6 1009.4,194.1 1011.3,191.6 1013.7,190.4 1016.9,190.9 1019.0,189.0 1018.7,186.0 1018.2,183.0 1017.6,180.1 1017.7,177.0 1019.2,174.4 1020.9,171.9 1021.7,169.0 1024.4,169.8 1027.1,170.7 1029.7,171.7 1030.3,169.0 1032.9,167.4 1032.7,164.3 1034.7,162.3 1036.0,160.0 1035.2,157.0 1032.7,154.8 1032.2,151.6 1030.5,149.1 1029.9,146.3 1028.0,144.1 1026.9,141.6 1025.1,139.4 1023.5,137.1 1023.2,134.4 1021.9,132.0 1022.2,129.1 1020.3,126.9 1019.8,124.2 1021.1,121.5" fill="#c4aca3" stroke="#4f4643" stroke-width="1" stroke-linejoin="round"/><polygon points="1070.2,347.7 1073.1,349.5 1075.6,351.9 1075.8,355.1 1074.5,358.2 1074.4,361.4 1077.1,360.8 1079.7,361.8 1082.4,361.6 1085.0,362.0 1087.0,359.9 1089.8,359.2 1092.2,357.8 1095.5,357.6 1098.6,358.9 1101.7,359.6 1104.9,359.3 1107.9,359.8 1110.9,360.9 1113.8,362.1 1117.0,362.0 1119.8,363.5 1121.8,366.0 1122.9,368.9 1123.0,372.0 1125.8,372.4 1128.5,373.2 1131.3,372.6 1132.2,370.1 1132.7,367.5 1133.7,365.0 1135.6,367.4 1138.5,368.5 1139.6,371.0 1138.4,373.8 1139.7,376.3 1139.6,379.0 1142.7,380.1 1145.5,381.7 1148.0,383.9 1148.6,386.5 1147.9,389.3 1149.3,391.9 1149.0,394.6 1151.7,396.3 1154.5,398.0 1157.4,399.3 1156.4,401.8 1155.0,404.0 1152.2,405.9 1150.0,408.6 1146.8,410.0 1147.8,412.5 1147.8,415.2 1147.2,417.8 1147.9,420.4 1148.0,423.0 1145.7,424.5 1143.2,425.4 1141.5,428.1 1140.1,431.0 1138.5,433.7 1136.0,434.8 1133.2,434.8 1130.6,435.8 1128.3,437.3 1125.5,437.6 1123.0,438.5 1120.2,438.7 1117.3,438.3 1114.4,438.7 1111.7,439.8 1108.8,439.6 1105.8,439.6 1103.5,441.9 1100.5,442.1 1097.6,442.4 1095.1,444.2 1092.2,444.4 1089.6,444.4 1086.9,445.2 1084.3,444.1 1081.6,443.9 1079.0,444.4 1076.3,445.5 1073.5,446.1 1071.3,448.2 1068.5,448.8 1066.0,450.3 1063.7,448.7 1061.4,447.2 1058.9,445.9 1056.6,444.4 1056.8,441.2 1056.6,438.0 1055.4,435.0 1054.2,432.2 1053.3,429.2 1051.1,426.7 1051.0,423.4 1049.5,420.7 1052.6,418.6 1055.4,416.0 1058.6,415.2 1061.2,413.3 1063.7,411.2 1064.2,408.1 1065.3,405.2 1066.7,402.4 1067.3,399.3 1064.7,397.9 1063.3,395.4 1061.4,393.4 1061.7,390.5 1062.5,387.8 1063.3,385.1 1065.0,382.7 1062.9,380.7 1059.8,380.1 1057.8,378.0 1058.6,375.4 1060.0,373.2 1061.9,371.2 1062.5,368.5 1064.9,366.2 1068.0,365.2 1070.8,363.7 1069.1,361.0 1067.8,358.0 1066.0,355.4 1063.7,353.0 1066.3,351.7 1067.8,349.2" fill="#f2c3aa" stroke="#6a5046" stroke-width="1" stroke-linejoin="round"/><polygon points="1213.8,254.8 1217.3,256.6 1217.1,259.3 1217.1,261.9 1217.3,264.6 1216.4,267.2 1213.0,268.4 1210.2,270.8 1210.2,273.5 1208.4,275.7 1206.9,277.9 1206.7,280.6 1206.3,283.4 1204.5,285.5 1203.3,288.0 1203.1,290.8 1201.3,293.0 1199.3,296.2 1196.9,299.2 1196.5,302.3 1196.9,305.4 1199.0,307.7 1200.7,310.5 1203.1,312.6 1206.4,312.6 1209.4,313.4 1212.6,313.9 1215.6,315.2 1218.5,317.0 1221.1,319.5 1224.4,320.6 1227.3,321.6 1230.2,322.8 1233.3,323.2 1236.9,326.8 1240.4,323.2 1239.8,320.6 1239.6,317.9 1240.9,315.5 1240.7,312.7 1241.9,310.3 1243.4,308.0 1244.0,305.4 1244.9,301.0 1242.0,298.8 1238.7,297.4 1236.8,295.3 1235.1,293.0 1234.1,290.4 1234.2,287.7 1233.9,285.1 1233.8,282.4 1234.5,279.6 1233.2,277.1 1234.2,274.3 1233.3,271.7 1231.6,269.3 1228.4,268.6 1226.7,266.2 1224.6,264.2 1221.9,263.0 1220.2,260.5 1218.6,258.0 1215.5,257.2" fill="#f2c3aa" stroke="#6a5046" stroke-width="1" stroke-linejoin="round"/><path d="M1048.2,138.3 a11.0,11.0 0 0 1 22,0 v27.0 l-11.0,9 l-11.0,-9 z" fill="#0079c1"/><circle cx="1059.2" cy="138.3" r="5.2" fill="#fff"/><rect x="1211.6" y="268.6" width="23.5" height="37.7" rx="9" fill="#0079c1"/><circle cx="1223.3" cy="279.3" r="5.6" fill="#fff"/><path d="M1095.7,376.5 a11.0,11.0 0 0 1 22,0 v24.0 l-11.0,9 l-11.0,-9 z" fill="#0079c1"/><circle cx="1106.7" cy="376.5" r="5.2" fill="#fff"/><text x="739" y="202.3" font-size="19.5" font-weight="normal" text-anchor="start" textLength="62.5" lengthAdjust="spacing" fill="#f4f4f4" stroke="#f4f4f4" stroke-width="2.6" stroke-linejoin="round" opacity="0.9">Rohini</text><text x="739" y="202.3" font-size="19.5" font-weight="normal" text-anchor="start" textLength="62.5" lengthAdjust="spacing" fill="#4f4f4f" stroke="#4f4f4f" stroke-width="0.4">Rohini</text><text x="848.5" y="303" font-size="19.5" font-weight="normal" text-anchor="start" textLength="73.5" lengthAdjust="spacing" fill="#f4f4f4" stroke="#f4f4f4" stroke-width="2.6" stroke-linejoin="round" opacity="0.9">Punjabi</text><text x="848.5" y="303" font-size="19.5" font-weight="normal" text-anchor="start" textLength="73.5" lengthAdjust="spacing" fill="#4f4f4f" stroke="#4f4f4f" stroke-width="0.4">Punjabi</text><text x="862" y="325.6" font-size="19.5" font-weight="normal" text-anchor="start" textLength="47" lengthAdjust="spacing" fill="#f4f4f4" stroke="#f4f4f4" stroke-width="2.6" stroke-linejoin="round" opacity="0.9">Bagh</text><text x="862" y="325.6" font-size="19.5" font-weight="normal" text-anchor="start" textLength="47" lengthAdjust="spacing" fill="#4f4f4f" stroke="#4f4f4f" stroke-width="0.4">Bagh</text><text x="1031" y="166.7" font-size="18.5" font-weight="normal" text-anchor="start" textLength="56" lengthAdjust="spacing" fill="#f4f4f4" stroke="#f4f4f4" stroke-width="2.6" stroke-linejoin="round" opacity="0.9">North</text><text x="1031" y="166.7" font-size="18.5" font-weight="normal" text-anchor="start" textLength="56" lengthAdjust="spacing" fill="#505050" stroke="#505050" stroke-width="0.4">North</text><text x="1034" y="189.2" font-size="18.5" font-weight="normal" text-anchor="start" textLength="50" lengthAdjust="spacing" fill="#f4f4f4" stroke="#f4f4f4" stroke-width="2.6" stroke-linejoin="round" opacity="0.9">Delhi</text><text x="1034" y="189.2" font-size="18.5" font-weight="normal" text-anchor="start" textLength="50" lengthAdjust="spacing" fill="#505050" stroke="#505050" stroke-width="0.4">Delhi</text><text x="1151" y="317" font-size="19.5" font-weight="normal" text-anchor="start" textLength="100.5" lengthAdjust="spacing" fill="#f4f4f4" stroke="#f4f4f4" stroke-width="2.6" stroke-linejoin="round" opacity="0.9">Civil Lines</text><text x="1151" y="317" font-size="19.5" font-weight="normal" text-anchor="start" textLength="100.5" lengthAdjust="spacing" fill="#4f4f4f" stroke="#4f4f4f" stroke-width="0.4">Civil Lines</text><text x="1273.3" y="323.4" font-size="16" font-weight="normal" text-anchor="start" textLength="43" lengthAdjust="spacing" fill="#f4f4f4" stroke="#f4f4f4" stroke-width="2.6" stroke-linejoin="round" opacity="0.9">Nazul</text><text x="1273.3" y="323.4" font-size="16" font-weight="normal" text-anchor="start" textLength="43" lengthAdjust="spacing" fill="#4a4a4a" stroke="#4a4a4a" stroke-width="0.4">Nazul</text><text x="1156.5" y="358.5" font-size="19.5" font-weight="normal" text-anchor="start" textLength="79" lengthAdjust="spacing" fill="#f4f4f4" stroke="#f4f4f4" stroke-width="2.6" stroke-linejoin="round" opacity="0.9">Central</text><text x="1156.5" y="358.5" font-size="19.5" font-weight="normal" text-anchor="start" textLength="79" lengthAdjust="spacing" fill="#4f4f4f" stroke="#4f4f4f" stroke-width="0.4">Central</text><text x="1168.3" y="383" font-size="19.5" font-weight="normal" text-anchor="start" textLength="55" lengthAdjust="spacing" fill="#f4f4f4" stroke="#f4f4f4" stroke-width="2.6" stroke-linejoin="round" opacity="0.9">Delhi</text><text x="1168.3" y="383" font-size="19.5" font-weight="normal" text-anchor="start" textLength="55" lengthAdjust="spacing" fill="#4f4f4f" stroke="#4f4f4f" stroke-width="0.4">Delhi</text><text x="1051.5" y="396" font-size="16.5" font-weight="normal" text-anchor="start" textLength="85.5" lengthAdjust="spacing" fill="#f4f4f4" stroke="#f4f4f4" stroke-width="2.6" stroke-linejoin="round" opacity="0.9">Karol Bagh</text><text x="1051.5" y="396" font-size="16.5" font-weight="normal" text-anchor="start" textLength="85.5" lengthAdjust="spacing" fill="#5a5a5a" stroke="#5a5a5a" stroke-width="0.4">Karol Bagh</text><text x="1151" y="487" font-size="19.5" font-weight="normal" text-anchor="start" textLength="114.5" lengthAdjust="spacing" fill="#f4f4f4" stroke="#f4f4f4" stroke-width="2.6" stroke-linejoin="round" opacity="0.9">Connaught</text><text x="1151" y="487" font-size="19.5" font-weight="normal" text-anchor="start" textLength="114.5" lengthAdjust="spacing" fill="#4f4f4f" stroke="#4f4f4f" stroke-width="0.4">Connaught</text><text x="1192.7" y="268" font-size="14" font-weight="normal" text-anchor="start" textLength="80" lengthAdjust="spacing" fill="#f4f4f4" stroke="#f4f4f4" stroke-width="2.6" stroke-linejoin="round" opacity="0.9">Chandrawali</text><text x="1192.7" y="268" font-size="14" font-weight="normal" text-anchor="start" textLength="80" lengthAdjust="spacing" fill="#6a6a6a">Chandrawali</text><text x="1225" y="223.5" font-size="14.5" font-weight="normal" text-anchor="start" textLength="67" lengthAdjust="spacing" fill="#f4f4f4" stroke="#f4f4f4" stroke-width="2.6" stroke-linejoin="round" opacity="0.9">Usmanpur</text><text x="1225" y="223.5" font-size="14.5" font-weight="normal" text-anchor="start" textLength="67" lengthAdjust="spacing" fill="#6a6a6a">Usmanpur</text><text x="1283" y="106.2" font-size="14" font-weight="normal" text-anchor="start" textLength="72.5" lengthAdjust="spacing" fill="#f4f4f4" stroke="#f4f4f4" stroke-width="2.6" stroke-linejoin="round" opacity="0.9">Sonia Vihar</text><text x="1283" y="106.2" font-size="14" font-weight="normal" text-anchor="start" textLength="72.5" lengthAdjust="spacing" fill="#6a6a6a">Sonia Vihar</text><text x="1281.7" y="208.5" font-size="20" font-weight="normal" text-anchor="start" textLength="112.7" lengthAdjust="spacing" fill="#f4f4f4" stroke="#f4f4f4" stroke-width="2.6" stroke-linejoin="round" opacity="0.9">Seelampur</text><text x="1281.7" y="208.5" font-size="20" font-weight="normal" text-anchor="start" textLength="112.7" lengthAdjust="spacing" fill="#4f4f4f" stroke="#4f4f4f" stroke-width="0.4">Seelampur</text><text x="1404" y="203" font-size="19.5" font-weight="normal" text-anchor="start" textLength="76" lengthAdjust="spacing" fill="#f4f4f4" stroke="#f4f4f4" stroke-width="2.6" stroke-linejoin="round" opacity="0.9">Yamuna</text><text x="1404" y="203" font-size="19.5" font-weight="normal" text-anchor="start" textLength="76" lengthAdjust="spacing" fill="#4f4f4f" stroke="#4f4f4f" stroke-width="0.4">Yamuna</text><text x="1417" y="225.6" font-size="19.5" font-weight="normal" text-anchor="start" textLength="50.3" lengthAdjust="spacing" fill="#f4f4f4" stroke="#f4f4f4" stroke-width="2.6" stroke-linejoin="round" opacity="0.9">Vihar</text><text x="1417" y="225.6" font-size="19.5" font-weight="normal" text-anchor="start" textLength="50.3" lengthAdjust="spacing" fill="#4f4f4f" stroke="#4f4f4f" stroke-width="0.4">Vihar</text><text x="1413.6" y="282" font-size="20" font-weight="normal" text-anchor="start" textLength="111.4" lengthAdjust="spacing" fill="#f4f4f4" stroke="#f4f4f4" stroke-width="2.6" stroke-linejoin="round" opacity="0.9">Shahadara</text><text x="1413.6" y="282" font-size="20" font-weight="normal" text-anchor="start" textLength="111.4" lengthAdjust="spacing" fill="#4f4f4f" stroke="#4f4f4f" stroke-width="0.4">Shahadara</text><text x="1410.4" y="478.2" font-size="20" font-weight="normal" text-anchor="start" textLength="107" lengthAdjust="spacing" fill="#f4f4f4" stroke="#f4f4f4" stroke-width="2.6" stroke-linejoin="round" opacity="0.9">East Delhi</text><text x="1410.4" y="478.2" font-size="20" font-weight="normal" text-anchor="start" textLength="107" lengthAdjust="spacing" fill="#4f4f4f" stroke="#4f4f4f" stroke-width="0.4">East Delhi</text><text x="1949" y="337.5" font-size="14.5" font-weight="normal" text-anchor="start" textLength="66" lengthAdjust="spacing" fill="#f4f4f4" stroke="#f4f4f4" stroke-width="2.6" stroke-linejoin="round" opacity="0.9">Ghaziabad</text><text x="1949" y="337.5" font-size="14.5" font-weight="normal" text-anchor="start" textLength="66" lengthAdjust="spacing" fill="#6a6a6a">Ghaziabad</text><text x="502" y="282.3" font-size="14" font-weight="normal" text-anchor="start" textLength="24" lengthAdjust="spacing" fill="#f4f4f4" stroke="#f4f4f4" stroke-width="2.6" stroke-linejoin="round" opacity="0.9">dka</text><text x="502" y="282.3" font-size="14" font-weight="normal" text-anchor="start" textLength="24" lengthAdjust="spacing" fill="#6a6a6a">dka</text><text x="502" y="352.6" font-size="14" font-weight="normal" text-anchor="start" textLength="8" lengthAdjust="spacing" fill="#f4f4f4" stroke="#f4f4f4" stroke-width="2.6" stroke-linejoin="round" opacity="0.9">a</text><text x="502" y="352.6" font-size="14" font-weight="normal" text-anchor="start" textLength="8" lengthAdjust="spacing" fill="#6a6a6a">a</text><text x="652" y="438" font-size="13" font-weight="normal" text-anchor="start" textLength="100" lengthAdjust="spacing" transform="rotate(-34 652 438)" fill="#9a9a9a">Najafgarh Drain</text><g stroke="#2e2e2e" stroke-width="2.2" fill="none"><polyline points="508,435 508,476"/><polyline points="508,455.5 691.5,455.5"/><polyline points="691.5,435 691.5,455.5"/><polyline points="624.5,455.5 624.5,476"/></g><text x="514.5" y="449" font-size="14.5" font-weight="bold" text-anchor="start" textLength="33" lengthAdjust="spacing" fill="#2e2e2e">5 km</text><text x="514.5" y="471.7" font-size="14.5" font-weight="bold" text-anchor="start" textLength="30" lengthAdjust="spacing" fill="#2e2e2e">2 mi</text><rect x="1676" y="460" width="420" height="24" fill="#f7f7f7" opacity="0.85"/><rect x="1970.5" y="461" width="3" height="23" fill="#e6e6e6"/><text x="1682" y="474" font-size="14.5" font-weight="normal" text-anchor="start" textLength="282" lengthAdjust="spacing" fill="#6b6b6b">Esri, TomTom, Garmin, METI/NASA, USGS</text><text x="1981.5" y="474" font-size="14.5" font-weight="normal" text-anchor="start" textLength="50" lengthAdjust="spacing" fill="#6b6b6b">Powere</text><text x="2063" y="474" font-size="14.5" font-weight="normal" text-anchor="start" fill="#6b6b6b">Esri</text><rect x="2031" y="81" width="40.5" height="39.5" fill="#000" opacity="0.12"/><rect x="2031" y="80" width="40.5" height="39.5" fill="#fff"/><g fill="none" stroke="#4a4a4a" stroke-width="1.2"><rect x="2042" y="89" width="8" height="8"/><rect x="2053" y="89" width="8" height="8"/><rect x="2042" y="100" width="8" height="8"/><rect x="2053" y="100" width="8" height="8"/></g><g stroke="#7a7a7a" stroke-width="0.8" fill="none"><path d="M2043 95l3-3 2 2M2054 96l6-6M2043 106c2-3 4-3 7-1M2055 101v6"/></g><rect x="2031" y="133" width="40.5" height="229.5" fill="#000" opacity="0.12"/><rect x="2031" y="132" width="40.5" height="229.5" fill="#fff"/><g stroke="#3a3a3a" stroke-width="1.5"><line x1="2045" y1="153" x2="2058" y2="153"/><line x1="2051.5" y1="146.5" x2="2051.5" y2="159.5"/><line x1="2045" y1="342.5" x2="2058" y2="342.5"/></g><line x1="2051.5" y1="186" x2="2051.5" y2="310" stroke="#a8a8a8" stroke-width="2"/><circle cx="2051.5" cy="256" r="8.6" fill="#fff" stroke="#0f78c0" stroke-width="2.2"/><rect x="2031" y="365.5" width="40.5" height="80" fill="#000" opacity="0.12"/><rect x="2031" y="364.5" width="40.5" height="80" fill="#fff"/><g fill="none" stroke="#4a4a4a" stroke-width="1.4"><path d="M2046 379h8a4 4 0 0 1 0 8h-1"/><path d="M2049 375.5l-3.5 3.5 3.5 3.5"/></g><g fill="none" stroke="#cfcfcf" stroke-width="1.4"><path d="M2057 420h-8a4 4 0 0 0 0 8h1"/><path d="M2054 416.5l3.5 3.5-3.5 3.5"/></g><rect x="2031" y="459" width="40.5" height="30" fill="#000" opacity="0.12"/><rect x="2031" y="458" width="40.5" height="30" fill="#fff"/><g fill="none" stroke="#4a4a4a" stroke-width="1.3"><path d="M2043 478l8.5-7.5 8.5 7.5M2045.5 476v9h12v-9"/></g></g></svg>
<div style="position:absolute;left:2096px;top:53px;width:60px;height:956px;background:#fff;"></div>
<div style="position:absolute;left:2096px;top:53px;width:1px;height:956px;background:#dcdcdc;"></div>
<div style="position:absolute;left:2155px;top:53px;width:1px;height:956px;background:#cfcfcf;"></div>
<div style="position:absolute;left:2097px;top:103px;width:58px;height:50px;background:#ececec;"></div>
<div style="position:absolute;left:2097px;top:303px;width:58px;height:1px;background:#dcdcdc;"></div>
<div style="position:absolute;left:2097px;top:656px;width:58px;height:1px;background:#dcdcdc;"></div>
<svg style="position:absolute;left:2115.0px;top:66.0px;" width="24" height="24" viewBox="0 0 24 24"><path d="M12 3.5c-3 0-4.8 2.2-4.8 4.6v7.6L12 20.5l4.8-4.8V8.1C16.8 5.7 15 3.5 12 3.5z" fill="none" stroke="#666666" stroke-width="1.3"/><circle cx="12" cy="8.6" r="1.5" fill="none" stroke="#666666" stroke-width="1.2"/></svg>
<svg style="position:absolute;left:2115.0px;top:116.5px;" width="24" height="24" viewBox="0 0 24 24"><g fill="none" stroke="#666666" stroke-width="1.2" stroke-linecap="round"><path d="M9 7.5v-3M11.5 6.5v-3M14 6.5v-2.5M16.5 7v-2"/><path d="M9 7.5c0 2 .5 3 .5 3M16.5 7v6.5c0 2 .6 3.5 1.2 5.5"/><path d="M5 11.5l3 3.5M4 14l4.5 4.5M6.5 19l3 2"/></g><rect x="12.5" y="4" width="4.5" height="6" fill="none" stroke="#666666" stroke-width="1"/></svg>
<svg style="position:absolute;left:2115.0px;top:166.5px;" width="24" height="24" viewBox="0 0 24 24"><path d="M6.5 5.5l12 7.5-11.5 5.5z" fill="none" stroke="#666666" stroke-width="1.3" stroke-linejoin="round"/></svg>
<svg style="position:absolute;left:2115.5px;top:217.0px;" width="24" height="24" viewBox="0 0 24 24"><circle cx="10" cy="10" r="6.2" fill="none" stroke="#666666" stroke-width="1.3"/><path d="M7 10h6M10 7v6" stroke="#666666" stroke-width="1.3"/><line x1="14.5" y1="14.5" x2="20" y2="20" stroke="#666666" stroke-width="2.4"/></svg>
<svg style="position:absolute;left:2115.5px;top:267.0px;" width="24" height="24" viewBox="0 0 24 24"><circle cx="10" cy="10" r="6.2" fill="none" stroke="#666666" stroke-width="1.3"/><path d="M7 10h6" stroke="#666666" stroke-width="1.3"/><line x1="14.5" y1="14.5" x2="20" y2="20" stroke="#666666" stroke-width="2.4"/></svg>
<svg style="position:absolute;left:2115.0px;top:317.5px;" width="24" height="24" viewBox="0 0 24 24"><g stroke="#666666" stroke-width="1.6"><path d="M8.5 4.5h10M8.5 9.5h10M8.5 14.5h10M8.5 19.5h10"/></g><g fill="#666666"><rect x="3.5" y="3.5" width="2" height="2"/><rect x="3.5" y="8.5" width="2" height="2"/><rect x="3.5" y="13.5" width="2" height="2"/><rect x="3.5" y="18.5" width="2" height="2"/></g></svg>
<svg style="position:absolute;left:2115.0px;top:367.0px;" width="24" height="24" viewBox="0 0 24 24"><g fill="none" stroke="#666666" stroke-width="1.3"><path d="M3.5 6.5h6M3.5 6.5l2-2M3.5 6.5l2 2M14.5 6.5h6M20.5 6.5l-2-2M20.5 6.5l-2 2"/><rect x="2.5" y="12" width="19" height="6.5"/><path d="M7 12v4M11 12v4M15 12v4M19 12v4"/></g></svg>
<svg style="position:absolute;left:2116.0px;top:417.5px;" width="24" height="24" viewBox="0 0 24 24"><g fill="none" stroke="#666666" stroke-width="1.3"><path d="M17 4.5H4v14h9"/><path d="M8 4.5v14"/></g><rect x="13.5" y="9.5" width="7" height="6" fill="#666666"/><line x1="17" y1="15.5" x2="17" y2="21.5" stroke="#666666" stroke-width="2"/></svg>
<svg style="position:absolute;left:2115.0px;top:467.0px;" width="24" height="24" viewBox="0 0 24 24"><g fill="none" stroke="#666666" stroke-width="1.3"><path d="M14 3.5H3.5v13h5"/><path d="M4.5 13l4-4 3 2.5 3-3"/><path d="M10 20.5l1.2-4L19 8.7l2.5 2.5-7.8 7.8z"/></g></svg>
<svg style="position:absolute;left:2115.0px;top:517.0px;" width="24" height="24" viewBox="0 0 24 24"><g fill="none" stroke="#666666" stroke-width="1.3"><path d="M12.5 21H4.5V3.5h8l4 4V13"/><path d="M12.5 3.5v4h4"/><path d="M7 18c1.5-3 3-5.5 5-7"/><path d="M15 17.5h6M18 14.5v6"/></g></svg>
<svg style="position:absolute;left:2115.5px;top:568.0px;" width="24" height="24" viewBox="0 0 24 24"><g fill="none" stroke="#666666" stroke-width="1.3"><path d="M12 4H4v17h17v-8"/><path d="M9 15c0-5 3-7.5 9-7.5"/><path d="M15.5 4.5l3 3-3 3"/></g></svg>
<svg style="position:absolute;left:2115.5px;top:618.5px;" width="24" height="24" viewBox="0 0 24 24"><circle cx="12" cy="12" r="9" fill="none" stroke="#666666" stroke-width="1.3"/><path d="M8.5 8.5l7 7M15.5 8.5l-7 7" stroke="#666666" stroke-width="1.3"/></svg>
<svg style="position:absolute;left:2115.5px;top:669.0px;" width="24" height="24" viewBox="0 0 24 24"><g fill="none" stroke="#666666" stroke-width="1.3"><rect x="3.5" y="3.5" width="17" height="17"/><path d="M3.5 9.2h17M3.5 14.8h17M9.2 3.5v17M14.8 3.5v17"/></g></svg>
<svg style="position:absolute;left:2115.5px;top:720.0px;" width="24" height="24" viewBox="0 0 24 24"><g fill="none" stroke="#666666" stroke-width="1.3"><path d="M3.5 4.5h6l2 2h-3.5l-4 4z"/><path d="M3.5 4.5v10l5 0"/><path d="M10 9.5l8 -1-2 5 4 4-2 2-4-4-4 2z"/></g></svg>
<svg style="position:absolute;left:2115.0px;top:977.0px;" width="24" height="24" viewBox="0 0 24 24"><g fill="none" stroke="#666666" stroke-width="1.3"><path d="M11 7l-5 5 5 5M17 7l-5 5 5 5"/></g></svg>
<div style="position:absolute;left:501px;top:484px;width:1595px;height:525px;background:#fff;"></div>
<div style="position:absolute;left:501px;top:484px;width:1595px;height:1px;background:#d8d8d8;"></div>
<div style="position:absolute;top:501.52px;font-size:19.0px;line-height:23px;color:#4a4a4a;font-weight:normal;white-space:nowrap;left:517.5px;">Results</div>
<svg style="position:absolute;left:590px;top:505px;" width="14" height="16" viewBox="0 0 14 16"><polyline points="4,3 9.5,8 4,13" fill="none" stroke="#6b6b6b" stroke-width="1.4"/></svg>
<div style="position:absolute;top:500.53px;font-size:20.4px;line-height:24px;color:#4a4a4a;font-weight:normal;white-space:nowrap;left:612px;">Table</div>
<svg style="position:absolute;left:1594px;top:504px;" width="22" height="22" viewBox="0 0 22 22"><path d="M11 3v12M6.5 7.5L11 3l4.5 4.5" fill="none" stroke="#6e6e6e" stroke-width="1.4"/><path d="M3 13v7h16v-7" fill="none" stroke="#6e6e6e" stroke-width="1.4"/></svg>
<div style="position:absolute;top:503.04px;font-size:17.5px;line-height:21px;color:#6e6e6e;font-weight:normal;white-space:nowrap;letter-spacing:0.022px;left:1631px;">Export to Excel</div>
<svg style="position:absolute;left:1787px;top:502px;" width="26" height="24" viewBox="0 0 26 24"><g fill="none" stroke="#6e6e6e" stroke-width="1.3" stroke-dasharray="2.2 1.6"><rect x="2.5" y="2.5" width="5" height="18"/><rect x="9.5" y="2.5" width="5" height="18"/><rect x="16.5" y="2.5" width="5" height="9"/></g><circle cx="19" cy="17.5" r="3.6" fill="#fff" stroke="#6e6e6e" stroke-width="1.3"/><circle cx="19" cy="17.5" r="1.2" fill="#6e6e6e"/></svg>
<div style="position:absolute;top:502.44px;font-size:17.5px;line-height:21px;color:#6e6e6e;font-weight:normal;white-space:nowrap;letter-spacing:0.252px;left:1825px;">Customize table</div>
<div style="position:absolute;left:1975px;top:485px;width:1px;height:60px;background:#dcdcdc;"></div>
<svg style="position:absolute;left:1996px;top:504px;" width="20" height="22" viewBox="0 0 20 22"><polyline points="4,10 10,4 16,10" fill="none" stroke="#6e6e6e" stroke-width="1.4"/><polyline points="4,17 10,11 16,17" fill="none" stroke="#6e6e6e" stroke-width="1.4"/></svg>
<svg style="position:absolute;left:2056px;top:503px;" width="20" height="22" viewBox="0 0 20 22"><polyline points="4,4 10,10 16,4" fill="none" stroke="#6e6e6e" stroke-width="1.4"/><polyline points="4,11 10,17 16,11" fill="none" stroke="#6e6e6e" stroke-width="1.4"/></svg>
<div style="position:absolute;left:501px;top:545px;width:1595px;height:1px;background:#d6d6d6;"></div>
<div style="position:absolute;left:552px;top:546px;width:1px;height:463px;background:#d8d8d8;"></div>
<div style="position:absolute;left:502px;top:713px;width:50px;height:57px;background:#efefef;"></div>
<svg style="position:absolute;left:517px;top:559px;" width="24" height="24" viewBox="0 0 24 24"><circle cx="8.5" cy="9" r="7" fill="none" stroke="#8a8a8a" stroke-width="1.3"/><line x1="13.5" y1="14" x2="20" y2="20.5" stroke="#8a8a8a" stroke-width="2.6"/><path d="M7 12.5v-4.5l3-1.5v6" fill="none" stroke="#8a8a8a" stroke-width="1"/></svg>
<svg style="position:absolute;left:517px;top:616px;" width="22" height="22" viewBox="0 0 22 22"><g stroke="#8a8a8a" stroke-width="1.2" fill="none"><polyline points="2,2 2,20 20,20"/><line x1="7" y1="20" x2="7" y2="7"/><line x1="12" y1="20" x2="12" y2="4"/><line x1="17" y1="20" x2="17" y2="10"/></g></svg>
<svg style="position:absolute;left:517px;top:672px;" width="22" height="22" viewBox="0 0 22 22"><g stroke="#8a8a8a" stroke-width="1.4" fill="none"><polyline points="2,2 2,20 20,20"/></g><g fill="#8a8a8a"><circle cx="7" cy="16" r="1.3"/><circle cx="10" cy="11" r="1.3"/><circle cx="14" cy="13" r="1.3"/><circle cx="17" cy="7" r="1.3"/></g></svg>
<svg style="position:absolute;left:516px;top:729px;" width="24" height="22" viewBox="0 0 24 22"><g stroke="#8a8a8a" stroke-width="1.4" fill="none"><rect x="2" y="2.5" width="19" height="16"/><line x1="2" y1="6.5" x2="21" y2="6.5"/><line x1="2" y1="10.5" x2="21" y2="10.5"/><line x1="2" y1="14.5" x2="21" y2="14.5"/><line x1="8.5" y1="6.5" x2="8.5" y2="18.5"/><line x1="14.5" y1="6.5" x2="14.5" y2="18.5"/></g></svg>
<div style="position:absolute;left:553px;top:546px;width:1543px;height:54px;background:#f0f0f0;"></div>
<div style="position:absolute;left:553px;top:600px;width:1543px;height:1px;background:#d8d8d8;"></div>
<div style="position:absolute;left:553px;top:601px;width:62px;height:349px;background:#f2f2f2;"></div>
<div style="position:absolute;left:615px;top:601px;width:50px;height:349px;background:#f6f6f6;"></div>
<div style="position:absolute;left:615px;top:601px;width:1481px;height:69px;background:#e2f3fc;"></div>
<div style="position:absolute;left:615px;top:601px;width:50px;height:69px;background:#c7e5f7;"></div>
<div style="position:absolute;left:553px;top:670px;width:1543px;height:1px;background:#dcdcdc;"></div>
<div style="position:absolute;left:553px;top:740px;width:1543px;height:1px;background:#dcdcdc;"></div>
<div style="position:absolute;left:553px;top:810px;width:1543px;height:1px;background:#dcdcdc;"></div>
<div style="position:absolute;left:553px;top:880px;width:1543px;height:1px;background:#dcdcdc;"></div>
<div style="position:absolute;left:553px;top:950px;width:1543px;height:1px;background:#d2d2d2;"></div>
<div style="position:absolute;left:553px;top:951px;width:1543px;height:14px;background:linear-gradient(#f7f7f7,#efefef);"></div>
<div style="position:absolute;left:614px;top:546px;width:1px;height:404px;background:#dcdcdc;"></div>
<div style="position:absolute;left:990px;top:546px;width:1px;height:404px;background:#dcdcdc;"></div>
<div style="position:absolute;left:1359px;top:546px;width:1px;height:404px;background:#dcdcdc;"></div>
<div style="position:absolute;left:1726px;top:546px;width:1px;height:404px;background:#dcdcdc;"></div>
<svg style="position:absolute;left:571px;top:557px;" width="26" height="24" viewBox="0 0 26 24"><g fill="none" stroke="#323232" stroke-width="1.6"><rect x="3" y="2" width="20" height="4.5"/><line x1="9.5" y1="2" x2="9.5" y2="6.5"/><line x1="16" y1="2" x2="16" y2="6.5"/><rect x="16" y="9" width="7" height="12"/><line x1="16" y1="13" x2="23" y2="13"/><line x1="16" y1="17" x2="23" y2="17"/><path d="M3.5 10l8 8"/></g><path d="M9 19.5l4 .8-.8-4z" fill="#323232"/><path d="M3 9.5l2.5-1 1 2.5" fill="none" stroke="#323232" stroke-width="1.4"/></svg>
<div style="position:absolute;top:559.07px;font-size:20px;line-height:24px;color:#1f1f1f;font-weight:normal;white-space:nowrap;letter-spacing:0.198px;left:626px;-webkit-text-stroke:0.35px #1f1f1f;">Location</div>
<svg style="position:absolute;left:957px;top:562px;" width="12" height="20" viewBox="0 0 12 20"><path d="M1.5 7.5L6 2.5l4.5 5z" fill="#6e6e6e"/><path d="M1.5 12.5L6 17.5l4.5-5z" fill="#6e6e6e"/></svg>
<div style="position:absolute;left:1002px;top:565px;width:14px;height:14px;background:#0079c1;border-radius:50%;"></div>
<div style="position:absolute;top:558.57px;font-size:20px;line-height:24px;color:#1f1f1f;font-weight:normal;white-space:nowrap;letter-spacing:0.349px;left:1037px;-webkit-text-stroke:0.35px #1f1f1f;">2024 Total Population</div>
<svg style="position:absolute;left:1326px;top:562px;" width="12" height="20" viewBox="0 0 12 20"><path d="M1.5 7.5L6 2.5l4.5 5z" fill="#6e6e6e"/><path d="M1.5 12.5L6 17.5l4.5-5z" fill="#6e6e6e"/></svg>
<div style="position:absolute;top:558.57px;font-size:20px;line-height:24px;color:#1f1f1f;font-weight:normal;white-space:nowrap;letter-spacing:0.363px;left:1370px;-webkit-text-stroke:0.35px #1f1f1f;">2024 Total Male Population</div>
<svg style="position:absolute;left:1694px;top:562px;" width="12" height="20" viewBox="0 0 12 20"><path d="M1.5 7.5L6 2.5l4.5 5z" fill="#6e6e6e"/><path d="M1.5 12.5L6 17.5l4.5-5z" fill="#6e6e6e"/></svg>
<div style="position:absolute;top:558.57px;font-size:20px;line-height:24px;color:#1f1f1f;font-weight:normal;white-space:nowrap;letter-spacing:0.235px;left:1739px;-webkit-text-stroke:0.35px #1f1f1f;">2024 Total Female Population</div>
<svg style="position:absolute;left:2061px;top:562px;" width="12" height="20" viewBox="0 0 12 20"><path d="M1.5 7.5L6 2.5l4.5 5z" fill="#6e6e6e"/><path d="M1.5 12.5L6 17.5l4.5-5z" fill="#6e6e6e"/></svg>
<div style="position:absolute;top:622.76px;font-size:18px;line-height:22px;color:#555;font-weight:normal;white-space:nowrap;left:83.5px;width:1000px;text-align:center;">-</div>
<svg style="position:absolute;left:626px;top:621px;" width="30" height="30" viewBox="0 0 30 30"><circle cx="15" cy="14.6" r="12.5" fill="none" stroke="#6a6a6a" stroke-width="1.4"/><polyline points="9,15 13.2,19 21,11" fill="none" stroke="#6a6a6a" stroke-width="1.4"/></svg>
<div style="position:absolute;top:609.24px;font-size:19.5px;line-height:23px;color:#2b2b2b;font-weight:normal;white-space:nowrap;letter-spacing:0.422px;left:681.5px;">Benchmark</div>
<div style="position:absolute;top:635.94px;font-size:17.2px;line-height:21px;color:#6b6b6b;font-weight:normal;white-space:nowrap;letter-spacing:0.294px;left:681.5px;">Mean (Custom: 3 of 3)</div>
<svg style="position:absolute;left:1006px;top:623px;" width="22" height="22" viewBox="0 0 22 22"><path d="M3 19l1.3-5.2L15.5 2.6a1.6 1.6 0 0 1 2.3 0l1.6 1.6a1.6 1.6 0 0 1 0 2.3L8.2 17.7z" fill="none" stroke="#555" stroke-width="1.3"/><line x1="13.5" y1="4.6" x2="17.4" y2="8.5" stroke="#555" stroke-width="1.3"/></svg>
<div style="position:absolute;top:622.42px;font-size:19px;line-height:23px;color:#3a3a3a;font-weight:normal;white-space:nowrap;letter-spacing:-0.280px;right:817.28px;">250,000</div>
<svg style="position:absolute;left:1375px;top:623px;" width="22" height="22" viewBox="0 0 22 22"><path d="M3 19l1.3-5.2L15.5 2.6a1.6 1.6 0 0 1 2.3 0l1.6 1.6a1.6 1.6 0 0 1 0 2.3L8.2 17.7z" fill="none" stroke="#555" stroke-width="1.3"/><line x1="13.5" y1="4.6" x2="17.4" y2="8.5" stroke="#555" stroke-width="1.3"/></svg>
<div style="position:absolute;top:622.42px;font-size:19px;line-height:23px;color:#3a3a3a;font-weight:normal;white-space:nowrap;letter-spacing:-0.280px;right:449.28px;">100,000</div>
<svg style="position:absolute;left:1743px;top:623px;" width="22" height="22" viewBox="0 0 22 22"><path d="M3 19l1.3-5.2L15.5 2.6a1.6 1.6 0 0 1 2.3 0l1.6 1.6a1.6 1.6 0 0 1 0 2.3L8.2 17.7z" fill="none" stroke="#555" stroke-width="1.3"/><line x1="13.5" y1="4.6" x2="17.4" y2="8.5" stroke="#555" stroke-width="1.3"/></svg>
<div style="position:absolute;top:622.42px;font-size:19px;line-height:23px;color:#3a3a3a;font-weight:normal;white-space:nowrap;letter-spacing:-0.223px;right:81.22px;">50,000</div>
<div style="position:absolute;top:691.74px;font-size:19.5px;line-height:23px;color:#3a3a3a;font-weight:normal;white-space:nowrap;left:83.5px;width:1000px;text-align:center;">1</div>
<svg style="position:absolute;left:628.5px;top:693px;" width="24" height="24" viewBox="0 0 24 24"><defs><clipPath id="rg705"><path d="M3.5 10.5c0-3.5 3-5.5 6.5-5.2l3.2-2.3 2.8 1.8 3.8-.6-.8 3.2 2.8 2.2-3 2.2.6 3-3.6-.4-2.6 2.4c-4.6.8-9.7-1.6-9.7-6.3z"/></clipPath></defs><path d="M3.5 10.5c0-3.5 3-5.5 6.5-5.2l3.2-2.3 2.8 1.8 3.8-.6-.8 3.2 2.8 2.2-3 2.2.6 3-3.6-.4-2.6 2.4c-4.6.8-9.7-1.6-9.7-6.3z" fill="#5c5c5c" stroke="#3a3a3a" stroke-width="0.9"/><g clip-path="url(#rg705)" stroke="#e6e6e6" stroke-width="0.9"><path d="M2 12l8-8M5 15l10-10M9 17l10-10M13 18l8-8"/></g><path d="M3 18.5v1.6h18v-1.6" fill="none" stroke="#444" stroke-width="1.3"/><path d="M12 16.5v3.5" stroke="#444" stroke-width="1"/></svg>
<div style="position:absolute;top:679.94px;font-size:19.5px;line-height:23px;color:#2b2b2b;font-weight:normal;white-space:nowrap;letter-spacing:0.371px;left:681.5px;">Under Hill Lane</div>
<div style="position:absolute;top:705.94px;font-size:17.2px;line-height:21px;color:#6b6b6b;font-weight:normal;white-space:nowrap;letter-spacing:0.190px;left:681.5px;">Under Hill Lane, Civil Line Are…</div>
<svg style="position:absolute;left:958px;top:702px;" width="24" height="8" viewBox="0 0 24 8"><g fill="#1a1a1a"><circle cx="3" cy="4" r="2.2"/><circle cx="11.5" cy="4" r="2.2"/><circle cx="20" cy="4" r="2.2"/></g></svg>
<div style="position:absolute;left:1001.5px;top:686px;width:138px;height:39px;background:#f5bca2;border-radius:20px;"></div>
<svg style="position:absolute;left:1021.5px;top:696px;" width="12" height="20" viewBox="0 0 12 20"><line x1="6" y1="2" x2="6" y2="16" stroke="#1a1a1a" stroke-width="1.7"/><path d="M2.5 12.5L6 16.5l3.5-4" fill="none" stroke="#1a1a1a" stroke-width="1.7"/></svg>
<div style="position:absolute;top:691.40px;font-size:20.5px;line-height:25px;color:#1a1a1a;font-weight:normal;white-space:nowrap;letter-spacing:0.081px;left:1042.0px;-webkit-text-stroke:0.55px #1a1a1a;">-215,764</div>
<div style="position:absolute;top:692.74px;font-size:19.5px;line-height:23px;color:#3a3a3a;font-weight:normal;white-space:nowrap;right:811.00px;">34.2T</div>
<div style="position:absolute;left:1370.5px;top:686px;width:125.6px;height:39px;background:#f5bca2;border-radius:20px;"></div>
<svg style="position:absolute;left:1390.5px;top:696px;" width="12" height="20" viewBox="0 0 12 20"><line x1="6" y1="2" x2="6" y2="16" stroke="#1a1a1a" stroke-width="1.7"/><path d="M2.5 12.5L6 16.5l3.5-4" fill="none" stroke="#1a1a1a" stroke-width="1.7"/></svg>
<div style="position:absolute;top:691.40px;font-size:20.5px;line-height:25px;color:#1a1a1a;font-weight:normal;white-space:nowrap;letter-spacing:-0.072px;left:1411.0px;-webkit-text-stroke:0.55px #1a1a1a;">-81,764</div>
<div style="position:absolute;top:692.74px;font-size:19.5px;line-height:23px;color:#3a3a3a;font-weight:normal;white-space:nowrap;right:442.00px;">18.2T</div>
<div style="position:absolute;left:1738.5px;top:686px;width:126.5px;height:39px;background:#f5bca2;border-radius:20px;"></div>
<svg style="position:absolute;left:1758.5px;top:696px;" width="12" height="20" viewBox="0 0 12 20"><line x1="6" y1="2" x2="6" y2="16" stroke="#1a1a1a" stroke-width="1.7"/><path d="M2.5 12.5L6 16.5l3.5-4" fill="none" stroke="#1a1a1a" stroke-width="1.7"/></svg>
<div style="position:absolute;top:691.40px;font-size:20.5px;line-height:25px;color:#1a1a1a;font-weight:normal;white-space:nowrap;letter-spacing:0.078px;left:1779.0px;-webkit-text-stroke:0.55px #1a1a1a;">-34,000</div>
<div style="position:absolute;top:692.74px;font-size:19.5px;line-height:23px;color:#3a3a3a;font-weight:normal;white-space:nowrap;right:75.00px;">16.0T</div>
<div style="position:absolute;top:761.74px;font-size:19.5px;line-height:23px;color:#3a3a3a;font-weight:normal;white-space:nowrap;left:83.5px;width:1000px;text-align:center;">2</div>
<svg style="position:absolute;left:628.5px;top:763px;" width="24" height="24" viewBox="0 0 24 24"><defs><clipPath id="rg775"><path d="M3.5 10.5c0-3.5 3-5.5 6.5-5.2l3.2-2.3 2.8 1.8 3.8-.6-.8 3.2 2.8 2.2-3 2.2.6 3-3.6-.4-2.6 2.4c-4.6.8-9.7-1.6-9.7-6.3z"/></clipPath></defs><path d="M3.5 10.5c0-3.5 3-5.5 6.5-5.2l3.2-2.3 2.8 1.8 3.8-.6-.8 3.2 2.8 2.2-3 2.2.6 3-3.6-.4-2.6 2.4c-4.6.8-9.7-1.6-9.7-6.3z" fill="#5c5c5c" stroke="#3a3a3a" stroke-width="0.9"/><g clip-path="url(#rg775)" stroke="#e6e6e6" stroke-width="0.9"><path d="M2 12l8-8M5 15l10-10M9 17l10-10M13 18l8-8"/></g><path d="M3 18.5v1.6h18v-1.6" fill="none" stroke="#444" stroke-width="1.3"/><path d="M12 16.5v3.5" stroke="#444" stroke-width="1"/></svg>
<div style="position:absolute;top:749.94px;font-size:19.5px;line-height:23px;color:#2b2b2b;font-weight:normal;white-space:nowrap;letter-spacing:0.195px;left:681.5px;">Grand Trunk Road 2</div>
<div style="position:absolute;top:775.94px;font-size:17.2px;line-height:21px;color:#6b6b6b;font-weight:normal;white-space:nowrap;letter-spacing:0.178px;left:681.5px;">Grand Trunk Road, Azadpur, N…</div>
<svg style="position:absolute;left:958px;top:772px;" width="24" height="8" viewBox="0 0 24 8"><g fill="#1a1a1a"><circle cx="3" cy="4" r="2.2"/><circle cx="11.5" cy="4" r="2.2"/><circle cx="20" cy="4" r="2.2"/></g></svg>
<div style="position:absolute;left:1001.5px;top:756px;width:131px;height:39px;background:#4393c3;border-radius:20px;"></div>
<svg style="position:absolute;left:1021.5px;top:765px;" width="12" height="20" viewBox="0 0 12 20"><line x1="6" y1="18" x2="6" y2="4" stroke="#ffffff" stroke-width="1.7"/><path d="M2.5 7.5L6 3.5l3.5 4" fill="none" stroke="#ffffff" stroke-width="1.7"/></svg>
<div style="position:absolute;top:761.40px;font-size:20.5px;line-height:25px;color:#ffffff;font-weight:normal;white-space:nowrap;letter-spacing:0.066px;left:1042.0px;-webkit-text-stroke:0.55px #ffffff;">504,063</div>
<div style="position:absolute;top:762.74px;font-size:19.5px;line-height:23px;color:#3a3a3a;font-weight:normal;white-space:nowrap;right:811.00px;">754T</div>
<div style="position:absolute;left:1370.5px;top:756px;width:131px;height:39px;background:#4393c3;border-radius:20px;"></div>
<svg style="position:absolute;left:1390.5px;top:765px;" width="12" height="20" viewBox="0 0 12 20"><line x1="6" y1="18" x2="6" y2="4" stroke="#ffffff" stroke-width="1.7"/><path d="M2.5 7.5L6 3.5l3.5 4" fill="none" stroke="#ffffff" stroke-width="1.7"/></svg>
<div style="position:absolute;top:761.40px;font-size:20.5px;line-height:25px;color:#ffffff;font-weight:normal;white-space:nowrap;letter-spacing:0.066px;left:1411.0px;-webkit-text-stroke:0.55px #ffffff;">305,553</div>
<div style="position:absolute;top:762.74px;font-size:19.5px;line-height:23px;color:#3a3a3a;font-weight:normal;white-space:nowrap;right:442.00px;">406T</div>
<div style="position:absolute;left:1738.5px;top:756px;width:132.4px;height:39px;background:#4393c3;border-radius:20px;"></div>
<svg style="position:absolute;left:1758.5px;top:765px;" width="12" height="20" viewBox="0 0 12 20"><line x1="6" y1="18" x2="6" y2="4" stroke="#ffffff" stroke-width="1.7"/><path d="M2.5 7.5L6 3.5l3.5 4" fill="none" stroke="#ffffff" stroke-width="1.7"/></svg>
<div style="position:absolute;top:761.40px;font-size:20.5px;line-height:25px;color:#ffffff;font-weight:normal;white-space:nowrap;letter-spacing:0.553px;left:1779.0px;-webkit-text-stroke:0.55px #ffffff;">298,511</div>
<div style="position:absolute;top:762.74px;font-size:19.5px;line-height:23px;color:#3a3a3a;font-weight:normal;white-space:nowrap;right:75.00px;">349T</div>
<div style="position:absolute;top:831.74px;font-size:19.5px;line-height:23px;color:#3a3a3a;font-weight:normal;white-space:nowrap;left:83.5px;width:1000px;text-align:center;">3</div>
<svg style="position:absolute;left:628.5px;top:833px;" width="24" height="24" viewBox="0 0 24 24"><defs><clipPath id="rg845"><path d="M3.5 10.5c0-3.5 3-5.5 6.5-5.2l3.2-2.3 2.8 1.8 3.8-.6-.8 3.2 2.8 2.2-3 2.2.6 3-3.6-.4-2.6 2.4c-4.6.8-9.7-1.6-9.7-6.3z"/></clipPath></defs><path d="M3.5 10.5c0-3.5 3-5.5 6.5-5.2l3.2-2.3 2.8 1.8 3.8-.6-.8 3.2 2.8 2.2-3 2.2.6 3-3.6-.4-2.6 2.4c-4.6.8-9.7-1.6-9.7-6.3z" fill="#5c5c5c" stroke="#3a3a3a" stroke-width="0.9"/><g clip-path="url(#rg845)" stroke="#e6e6e6" stroke-width="0.9"><path d="M2 12l8-8M5 15l10-10M9 17l10-10M13 18l8-8"/></g><path d="M3 18.5v1.6h18v-1.6" fill="none" stroke="#444" stroke-width="1.3"/><path d="M12 16.5v3.5" stroke="#444" stroke-width="1"/></svg>
<div style="position:absolute;top:819.94px;font-size:19.5px;line-height:23px;color:#2b2b2b;font-weight:normal;white-space:nowrap;letter-spacing:0.302px;left:681.5px;">Karol Bāgh, Central, Delhi</div>
<div style="position:absolute;top:845.94px;font-size:17.2px;line-height:21px;color:#6b6b6b;font-weight:normal;white-space:nowrap;letter-spacing:0.205px;left:681.5px;">Karol Bāgh, Central, Delhi</div>
<svg style="position:absolute;left:958px;top:842px;" width="24" height="8" viewBox="0 0 24 8"><g fill="#1a1a1a"><circle cx="3" cy="4" r="2.2"/><circle cx="11.5" cy="4" r="2.2"/><circle cx="20" cy="4" r="2.2"/></g></svg>
<div style="position:absolute;left:1001.5px;top:826px;width:125.5px;height:39px;background:#f5bca2;border-radius:20px;"></div>
<svg style="position:absolute;left:1021.5px;top:836px;" width="12" height="20" viewBox="0 0 12 20"><line x1="6" y1="2" x2="6" y2="16" stroke="#1a1a1a" stroke-width="1.7"/><path d="M2.5 12.5L6 16.5l3.5-4" fill="none" stroke="#1a1a1a" stroke-width="1.7"/></svg>
<div style="position:absolute;top:831.40px;font-size:20.5px;line-height:25px;color:#1a1a1a;font-weight:normal;white-space:nowrap;letter-spacing:-0.088px;left:1042.0px;-webkit-text-stroke:0.55px #1a1a1a;">-47,467</div>
<div style="position:absolute;top:832.74px;font-size:19.5px;line-height:23px;color:#3a3a3a;font-weight:normal;white-space:nowrap;right:811.00px;">203T</div>
<div style="position:absolute;left:1370.5px;top:826px;width:107.5px;height:39px;background:#abd3e7;border-radius:20px;"></div>
<svg style="position:absolute;left:1390.5px;top:835px;" width="12" height="20" viewBox="0 0 12 20"><line x1="6" y1="18" x2="6" y2="4" stroke="#1a1a1a" stroke-width="1.7"/><path d="M2.5 7.5L6 3.5l3.5 4" fill="none" stroke="#1a1a1a" stroke-width="1.7"/></svg>
<div style="position:absolute;top:831.40px;font-size:20.5px;line-height:25px;color:#1a1a1a;font-weight:normal;white-space:nowrap;letter-spacing:-0.075px;left:1411.0px;-webkit-text-stroke:0.55px #1a1a1a;">8,164</div>
<div style="position:absolute;top:832.74px;font-size:19.5px;line-height:23px;color:#3a3a3a;font-weight:normal;white-space:nowrap;right:442.00px;">108T</div>
<div style="position:absolute;left:1738.5px;top:826px;width:119.7px;height:39px;background:#abd3e7;border-radius:20px;"></div>
<svg style="position:absolute;left:1758.5px;top:835px;" width="12" height="20" viewBox="0 0 12 20"><line x1="6" y1="18" x2="6" y2="4" stroke="#1a1a1a" stroke-width="1.7"/><path d="M2.5 7.5L6 3.5l3.5 4" fill="none" stroke="#1a1a1a" stroke-width="1.7"/></svg>
<div style="position:absolute;top:831.40px;font-size:20.5px;line-height:25px;color:#1a1a1a;font-weight:normal;white-space:nowrap;letter-spacing:0.099px;left:1779.0px;-webkit-text-stroke:0.55px #1a1a1a;">44,368</div>
<div style="position:absolute;top:832.74px;font-size:19.5px;line-height:23px;color:#3a3a3a;font-weight:normal;white-space:nowrap;right:75.00px;">94.4T</div>
<div style="position:absolute;top:901.74px;font-size:19.5px;line-height:23px;color:#3a3a3a;font-weight:normal;white-space:nowrap;left:83.5px;width:1000px;text-align:center;">4</div>
<svg style="position:absolute;left:628.5px;top:903px;" width="24" height="24" viewBox="0 0 24 24"><defs><clipPath id="rg915"><path d="M3.5 10.5c0-3.5 3-5.5 6.5-5.2l3.2-2.3 2.8 1.8 3.8-.6-.8 3.2 2.8 2.2-3 2.2.6 3-3.6-.4-2.6 2.4c-4.6.8-9.7-1.6-9.7-6.3z"/></clipPath></defs><path d="M3.5 10.5c0-3.5 3-5.5 6.5-5.2l3.2-2.3 2.8 1.8 3.8-.6-.8 3.2 2.8 2.2-3 2.2.6 3-3.6-.4-2.6 2.4c-4.6.8-9.7-1.6-9.7-6.3z" fill="#5c5c5c" stroke="#3a3a3a" stroke-width="0.9"/><g clip-path="url(#rg915)" stroke="#e6e6e6" stroke-width="0.9"><path d="M2 12l8-8M5 15l10-10M9 17l10-10M13 18l8-8"/></g><path d="M3 18.5v1.6h18v-1.6" fill="none" stroke="#444" stroke-width="1.3"/><path d="M12 16.5v3.5" stroke="#444" stroke-width="1"/></svg>
<div style="position:absolute;top:889.94px;font-size:19.5px;line-height:23px;color:#2b2b2b;font-weight:normal;white-space:nowrap;letter-spacing:0.721px;left:681.5px;">Jitender Communication</div>
<div style="position:absolute;top:915.94px;font-size:17.2px;line-height:21px;color:#6b6b6b;font-weight:normal;white-space:nowrap;letter-spacing:0.549px;left:681.5px;">Jitender Communication</div>
<svg style="position:absolute;left:958px;top:912px;" width="24" height="8" viewBox="0 0 24 8"><g fill="#1a1a1a"><circle cx="3" cy="4" r="2.2"/><circle cx="11.5" cy="4" r="2.2"/><circle cx="20" cy="4" r="2.2"/></g></svg>
<div style="position:absolute;left:1001.5px;top:896px;width:138px;height:39px;background:#f5bca2;border-radius:20px;"></div>
<svg style="position:absolute;left:1021.5px;top:906px;" width="12" height="20" viewBox="0 0 12 20"><line x1="6" y1="2" x2="6" y2="16" stroke="#1a1a1a" stroke-width="1.7"/><path d="M2.5 12.5L6 16.5l3.5-4" fill="none" stroke="#1a1a1a" stroke-width="1.7"/></svg>
<div style="position:absolute;top:901.40px;font-size:20.5px;line-height:25px;color:#1a1a1a;font-weight:normal;white-space:nowrap;letter-spacing:0.081px;left:1042.0px;-webkit-text-stroke:0.55px #1a1a1a;">-124,858</div>
<div style="position:absolute;top:902.74px;font-size:19.5px;line-height:23px;color:#3a3a3a;font-weight:normal;white-space:nowrap;right:811.00px;">125T</div>
<div style="position:absolute;left:1370.5px;top:896px;width:125.6px;height:39px;background:#f5bca2;border-radius:20px;"></div>
<svg style="position:absolute;left:1390.5px;top:906px;" width="12" height="20" viewBox="0 0 12 20"><line x1="6" y1="2" x2="6" y2="16" stroke="#1a1a1a" stroke-width="1.7"/><path d="M2.5 12.5L6 16.5l3.5-4" fill="none" stroke="#1a1a1a" stroke-width="1.7"/></svg>
<div style="position:absolute;top:901.40px;font-size:20.5px;line-height:25px;color:#1a1a1a;font-weight:normal;white-space:nowrap;letter-spacing:-0.072px;left:1411.0px;-webkit-text-stroke:0.55px #1a1a1a;">-32,873</div>
<div style="position:absolute;top:902.74px;font-size:19.5px;line-height:23px;color:#3a3a3a;font-weight:normal;white-space:nowrap;right:442.00px;">67.1T</div>
<div style="position:absolute;left:1738.5px;top:896px;width:107.5px;height:39px;background:#abd3e7;border-radius:20px;"></div>
<svg style="position:absolute;left:1758.5px;top:905px;" width="12" height="20" viewBox="0 0 12 20"><line x1="6" y1="18" x2="6" y2="4" stroke="#1a1a1a" stroke-width="1.7"/><path d="M2.5 7.5L6 3.5l3.5 4" fill="none" stroke="#1a1a1a" stroke-width="1.7"/></svg>
<div style="position:absolute;top:901.40px;font-size:20.5px;line-height:25px;color:#1a1a1a;font-weight:normal;white-space:nowrap;letter-spacing:-0.075px;left:1779.0px;-webkit-text-stroke:0.55px #1a1a1a;">8,016</div>
<div style="position:absolute;top:902.74px;font-size:19.5px;line-height:23px;color:#3a3a3a;font-weight:normal;white-space:nowrap;right:75.00px;">58.0T</div>
<svg style="position:absolute;left:583px;top:982px;" width="14" height="18" viewBox="0 0 14 18"><polyline points="9.5,3 4,9 9.5,15" fill="none" stroke="#b5b5b5" stroke-width="1.4"/></svg>
<div style="position:absolute;top:977.92px;font-size:19px;line-height:23px;color:#2b2b2b;font-weight:normal;white-space:nowrap;left:133px;width:1000px;text-align:center;">1</div>
<svg style="position:absolute;left:669px;top:982px;" width="14" height="18" viewBox="0 0 14 18"><polyline points="4.5,3 10,9 4.5,15" fill="none" stroke="#b5b5b5" stroke-width="1.4"/></svg>
<div style="position:absolute;top:977.92px;font-size:19px;line-height:23px;color:#2b2b2b;font-weight:normal;white-space:nowrap;letter-spacing:0.308px;left:728.5px;">1 - 5 of 5 rows</div>
<div style="position:absolute;top:980.44px;font-size:17.5px;line-height:21px;color:#555555;font-weight:normal;white-space:nowrap;letter-spacing:0.024px;left:1762px;">Rows per page</div>
<div style="position:absolute;left:1890px;top:972px;width:187px;height:40px;background:#fff;border:1px solid #d6d6d6;box-sizing:border-box;"></div>
<div style="position:absolute;top:979.76px;font-size:18px;line-height:22px;color:#2b2b2b;font-weight:normal;white-space:nowrap;letter-spacing:-0.084px;left:1905px;">All (5)</div>
<svg style="position:absolute;left:2040px;top:983px;" width="20" height="16" viewBox="0 0 20 16"><polyline points="3.5,4.5 10,11 16.5,4.5" fill="none" stroke="#2b2b2b" stroke-width="1.8"/></svg>
<svg style="position:absolute;left:0px;top:0px;" width="360" height="620" viewBox="0 0 360 620"><line x1="39" y1="170" x2="333" y2="170" stroke="#e31414" stroke-width="6.4" stroke-linecap="round"/><path d="M32 312.5 C 22 311, 11 309, 9 321 L 8.6 340 L 10 470 L 11 566 L 13 578 L 14.5 596 C 15 604, 19 606, 27 605.5 L 33 605.5" fill="none" stroke="#e91e1e" stroke-width="7" stroke-linecap="round" stroke-linejoin="round"/></svg>
</body></html>
